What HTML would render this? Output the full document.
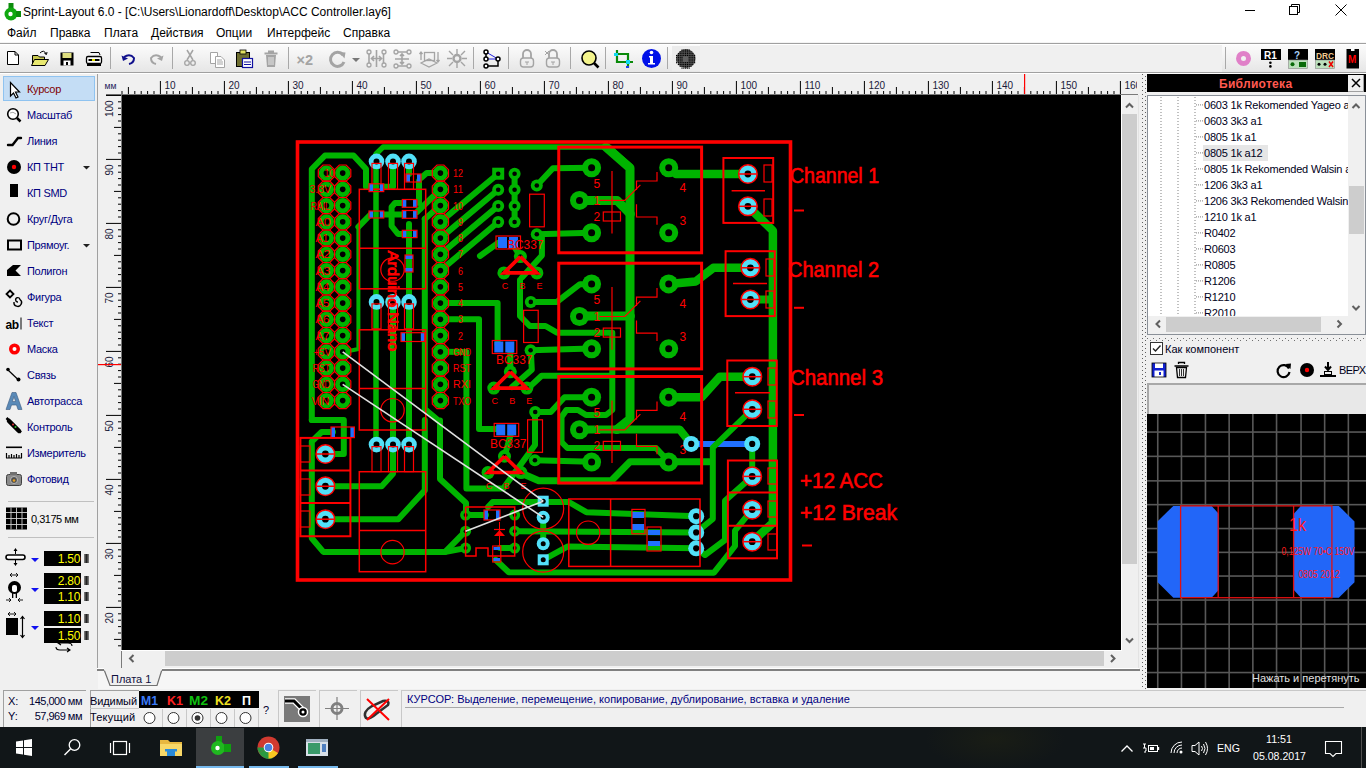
<!DOCTYPE html>
<html><head><meta charset="utf-8"><style>
html,body{margin:0;padding:0;width:1366px;height:768px;overflow:hidden;background:#f0f0f0;font-family:"Liberation Sans", sans-serif;}
.b{position:absolute;box-sizing:border-box}
.t{position:absolute;white-space:pre;line-height:1;font-family:"Liberation Sans", sans-serif}
svg{overflow:visible}
</style></head><body>
<div class="b" style="left:0px;top:0px;width:1366px;height:43px;background:#fff"></div>
<div class="b" style="left:0px;top:42px;width:1366px;height:1px;background:#f4f4f4"></div>
<div class="b" style="left:0px;top:43px;width:1366px;height:1px;background:#a0a0a0"></div>
<div class="b" style="left:0px;top:44px;width:1366px;height:1px;background:#fff"></div>
<div class="b" style="left:0px;top:45px;width:1366px;height:27px;background:#f0f0f0"></div>
<div class="b" style="left:0px;top:45px;width:700px;height:27px;background:linear-gradient(#fbfbfb,#f3f3f3 40%,#e6e6e6)"></div>
<div class="b" style="left:1222px;top:45px;width:144px;height:27px;background:linear-gradient(#fbfbfb,#f3f3f3 40%,#e6e6e6)"></div>
<div class="b" style="left:0px;top:72px;width:1366px;height:1px;background:#a0a0a0"></div>
<div class="b" style="left:0px;top:73px;width:1366px;height:1px;background:#fff"></div>
<svg class="b" style="left:2px;top:2px" width="20" height="20" viewBox="0 0 20 20">
<rect x="6.5" y="1" width="5" height="5" fill="#0c8c0c"/>
<circle cx="9" cy="12" r="6.5" fill="#10a810"/>
<rect x="14" y="9" width="5" height="6" fill="#0c8c0c"/>
<circle cx="8.5" cy="12" r="2.2" fill="#fff"/></svg>
<div class="t" style="left:23px;top:6px;font-size:12px;color:#000;">Sprint-Layout 6.0 - [C:\Users\Lionardoff\Desktop\ACC Controller.lay6]</div>
<div class="b" style="left:1245px;top:10px;width:10px;height:1px;background:#000"></div>
<svg class="b" style="left:1289px;top:4px" width="12" height="12"><rect x="0.5" y="2.5" width="8" height="8" fill="none" stroke="#000"/><path d="M2.5 2.5V0.5H10.5V8.5H8.5" fill="none" stroke="#000"/></svg>
<svg class="b" style="left:1335px;top:4px" width="12" height="12"><path d="M0.5 0.5L11.5 11.5M11.5 0.5L0.5 11.5" stroke="#000" stroke-width="1"/></svg>
<div class="t" style="left:7px;top:27px;font-size:12px;color:#000;">Файл</div>
<div class="t" style="left:50px;top:27px;font-size:12px;color:#000;">Правка</div>
<div class="t" style="left:104px;top:27px;font-size:12px;color:#000;">Плата</div>
<div class="t" style="left:151px;top:27px;font-size:12px;color:#000;">Действия</div>
<div class="t" style="left:216px;top:27px;font-size:12px;color:#000;">Опции</div>
<div class="t" style="left:267px;top:27px;font-size:12px;color:#000;">Интерфейс</div>
<div class="t" style="left:343px;top:27px;font-size:12px;color:#000;">Справка</div>
<div class="b" style="left:110px;top:47px;width:1px;height:22px;background:#a8a8a8"></div>
<div class="b" style="left:172px;top:47px;width:1px;height:22px;background:#a8a8a8"></div>
<div class="b" style="left:288px;top:47px;width:1px;height:22px;background:#a8a8a8"></div>
<div class="b" style="left:473px;top:47px;width:1px;height:22px;background:#a8a8a8"></div>
<div class="b" style="left:508px;top:47px;width:1px;height:22px;background:#a8a8a8"></div>
<div class="b" style="left:570px;top:47px;width:1px;height:22px;background:#a8a8a8"></div>
<div class="b" style="left:605px;top:47px;width:1px;height:22px;background:#a8a8a8"></div>
<div class="b" style="left:667px;top:47px;width:1px;height:22px;background:#a8a8a8"></div>
<div class="b" style="left:1225px;top:47px;width:1px;height:22px;background:#a8a8a8"></div>
<svg class="b" style="left:0;top:0" width="1366" height="74" viewBox="0 0 1366 74">
<path d="M7.5 51.5H15L18.5 55V64.5H7.5Z" fill="#fff" stroke="#000"/><path d="M15 51.5V55H18.5" fill="none" stroke="#000"/>
<path d="M32.5 55.5H38l1.5 1.5H44.5V65.5H32.5Z" fill="#c8c850" stroke="#000"/><path d="M34.5 59.5H48.5L45 65.5H31.5Z" fill="#e8e870" stroke="#000"/><path d="M40 53Q44 49 46 54M44.5 53.5L46.5 54.5L47 52" fill="none" stroke="#000"/>
<rect x="60.5" y="52.5" width="13" height="13" fill="#000"/><rect x="62.5" y="53" width="9" height="5" fill="#dede80"/><rect x="63.5" y="60.5" width="7" height="5" fill="#fff"/><rect x="66" y="62" width="2" height="3" fill="#000"/>
<path d="M90.5 52.5H99L100 55" fill="none" stroke="#000"/><rect x="86.5" y="56.5" width="15" height="7" rx="1.5" fill="#fff" stroke="#000" stroke-width="1.3"/><rect x="88.5" y="59" width="11" height="2" fill="#000"/><rect x="92" y="59" width="3" height="2" fill="#e0e000"/><rect x="87" y="64" width="14" height="2" fill="#000"/>
<path d="M124 57Q130 53 134 58Q134 63 129 64" fill="none" stroke="#10108c" stroke-width="2"/><path d="M121.5 55.5L123 61L128 58.5Z" fill="#10108c"/>
<path d="M161 57Q155 53 151 58Q151 63 156 64" fill="none" stroke="#a4a4a4" stroke-width="2"/><path d="M163.5 55.5L162 61L157 58.5Z" fill="#a4a4a4"/>
<path d="M187 50L193 60M193 50L187 60" stroke="#a4a4a4" stroke-width="1.5"/><circle cx="187" cy="63" r="2.3" fill="none" stroke="#a4a4a4" stroke-width="1.3"/><circle cx="193" cy="63" r="2.3" fill="none" stroke="#a4a4a4" stroke-width="1.3"/>
<path d="M210.5 52.5H217.5V63.5H210.5Z" fill="#fff" stroke="#a4a4a4"/><path d="M215.5 56.5H221L224.5 60V67.5H215.5Z" fill="#fff" stroke="#a4a4a4"/><path d="M217 60H222M217 62H223M217 64H223" stroke="#a4a4a4"/>
<rect x="236.5" y="52.5" width="13" height="14" fill="#6e6e30" stroke="#000"/><rect x="240" y="50" width="6" height="4" fill="#e0e060" stroke="#000" stroke-width="0.8"/><rect x="242.5" y="58.5" width="10" height="9" fill="#fff" stroke="#1010a0" stroke-width="1.2"/><path d="M244 62H251M244 64.5H251" stroke="#1010a0"/>
<path d="M264.5 53.5H277.5M268 51.5H274" stroke="#a4a4a4" stroke-width="2"/><path d="M266 55H276L275 67H267Z" fill="#a4a4a4"/><path d="M269 57V65M271 57V65M273 57V65" stroke="#e8e8e8"/>
<text x="296.5" y="64.5" font-size="14.5" font-weight="bold" fill="#a4a4a4" font-family="Liberation Sans">×2</text>
<path d="M343 55A7 7 0 1 0 344 62" fill="none" stroke="#a4a4a4" stroke-width="3"/><path d="M339 52L345.5 52.5L344.5 58.5Z" fill="#a4a4a4"/>
<path d="M352 58H360L356 62Z" fill="#777"/>
<path d="M376.5 50V67M369 51V65M383.5 51V65M372 58.5H381M374 56L371.5 58.5L374 61M379 56L381.5 58.5L379 61" stroke="#a4a4a4" stroke-width="1.6" fill="none"/><circle cx="369" cy="52" r="2" fill="#f0f0f0" stroke="#a4a4a4" stroke-width="1.3"/><circle cx="369" cy="65" r="2" fill="#f0f0f0" stroke="#a4a4a4" stroke-width="1.3"/><circle cx="384" cy="52" r="2" fill="#f0f0f0" stroke="#a4a4a4" stroke-width="1.3"/><circle cx="384" cy="65" r="2" fill="#f0f0f0" stroke="#a4a4a4" stroke-width="1.3"/>
<path d="M394 52H410M394 66H410M395 59H409M402 54V64M400 56L402 54L404 56M400 62L402 64L404 62" stroke="#a4a4a4" stroke-width="1.6" fill="none"/><circle cx="396" cy="52" r="2" fill="#f0f0f0" stroke="#a4a4a4" stroke-width="1.3"/><circle cx="409" cy="52" r="2" fill="#f0f0f0" stroke="#a4a4a4" stroke-width="1.3"/><circle cx="396" cy="66" r="2" fill="#f0f0f0" stroke="#a4a4a4" stroke-width="1.3"/><circle cx="409" cy="66" r="2" fill="#f0f0f0" stroke="#a4a4a4" stroke-width="1.3"/>
<rect x="424.5" y="52.5" width="10" height="8" fill="none" stroke="#a4a4a4" stroke-width="1.3"/><path d="M421 63L429 67L437 63L429 59Z" fill="none" stroke="#a4a4a4" stroke-width="1.2"/><path d="M421 60V52M419.5 54L421 52L422.5 54M438 52V62M436.5 60L438 62L439.5 60" stroke="#a4a4a4" stroke-width="1.3" fill="none"/>
<circle cx="457" cy="58.5" r="3.5" fill="none" stroke="#a4a4a4" stroke-width="2.5"/><path d="M447 58.5H452M462 58.5H467M457 49V54M457 63V68M449 51L453 55M465 51L461 55M449 66L453 62M465 66L461 62" stroke="#a4a4a4" stroke-width="1.4"/>
<path d="M486 52L498 59M486 59H498" stroke="#2020e0"/><path d="M486 52V59M486 66H498V59" fill="none" stroke="#000" stroke-width="1.5"/><circle cx="486" cy="52" r="2" fill="#fff" stroke="#000" stroke-width="1.5"/><circle cx="486" cy="59" r="2" fill="#fff" stroke="#000" stroke-width="1.5"/><circle cx="486" cy="66" r="2" fill="#fff" stroke="#000" stroke-width="1.5"/><circle cx="498" cy="59" r="2" fill="#fff" stroke="#000" stroke-width="1.5"/>
<path d="M523 58V54A4 4 0 0 1 531 54V58" fill="none" stroke="#a4a4a4" stroke-width="1.8"/><rect x="520.5" y="58" width="13" height="9" rx="3" fill="none" stroke="#a4a4a4" stroke-width="1.4"/><path d="M525 62H529M527 62V65" stroke="#a4a4a4"/>
<path d="M549 58V54A4 4 0 0 1 557 54V58" fill="none" stroke="#a4a4a4" stroke-width="1.8"/><rect x="546.5" y="58" width="13" height="9" rx="3" fill="none" stroke="#a4a4a4" stroke-width="1.4"/><path d="M551 62H555M553 62V65M545 51L549 55M545 55L549 51" stroke="#a4a4a4"/>
<circle cx="589" cy="58" r="7" fill="#f4f48c" stroke="#000" stroke-width="1.6"/><path d="M594 63L598.5 67.5" stroke="#000" stroke-width="2.6"/>
<path d="M617 50V62H633M614 54H628V68" fill="none" stroke="#0a8a0a" stroke-width="2.2"/><rect x="614" y="53" width="4" height="3" fill="#10d8f0"/><rect x="626" y="60" width="4" height="4" fill="#10d8f0"/><rect x="626" y="66" width="3" height="2" fill="#2040f0"/>
<circle cx="651.5" cy="58.5" r="9.5" fill="#0010e8"/><circle cx="651.5" cy="52.5" r="1.8" fill="#fff"/><path d="M649 56H653V63H655V64.5H648V63H650V57.5H649Z" fill="#fff"/>
<rect x="672" y="46" width="28" height="25" fill="#ececec"/><circle cx="686" cy="58.5" r="9.5" fill="#606060"/><rect x="681.4" y="49.5" width="1.2" height="1.2" fill="#000"/><rect x="683.2" y="49.5" width="1.2" height="1.2" fill="#000"/><rect x="685.0" y="49.5" width="1.2" height="1.2" fill="#000"/><rect x="686.8" y="49.5" width="1.2" height="1.2" fill="#000"/><rect x="688.6" y="49.5" width="1.2" height="1.2" fill="#000"/><rect x="679.6" y="51.3" width="1.2" height="1.2" fill="#000"/><rect x="681.4" y="51.3" width="1.2" height="1.2" fill="#000"/><rect x="683.2" y="51.3" width="1.2" height="1.2" fill="#000"/><rect x="685.0" y="51.3" width="1.2" height="1.2" fill="#000"/><rect x="686.8" y="51.3" width="1.2" height="1.2" fill="#000"/><rect x="688.6" y="51.3" width="1.2" height="1.2" fill="#000"/><rect x="690.4" y="51.3" width="1.2" height="1.2" fill="#000"/><rect x="677.8" y="53.1" width="1.2" height="1.2" fill="#000"/><rect x="679.6" y="53.1" width="1.2" height="1.2" fill="#000"/><rect x="681.4" y="53.1" width="1.2" height="1.2" fill="#000"/><rect x="683.2" y="53.1" width="1.2" height="1.2" fill="#000"/><rect x="685.0" y="53.1" width="1.2" height="1.2" fill="#000"/><rect x="686.8" y="53.1" width="1.2" height="1.2" fill="#000"/><rect x="688.6" y="53.1" width="1.2" height="1.2" fill="#000"/><rect x="690.4" y="53.1" width="1.2" height="1.2" fill="#000"/><rect x="692.2" y="53.1" width="1.2" height="1.2" fill="#000"/><rect x="676.0" y="54.9" width="1.2" height="1.2" fill="#000"/><rect x="677.8" y="54.9" width="1.2" height="1.2" fill="#000"/><rect x="679.6" y="54.9" width="1.2" height="1.2" fill="#000"/><rect x="681.4" y="54.9" width="1.2" height="1.2" fill="#000"/><rect x="683.2" y="54.9" width="1.2" height="1.2" fill="#000"/><rect x="685.0" y="54.9" width="1.2" height="1.2" fill="#000"/><rect x="686.8" y="54.9" width="1.2" height="1.2" fill="#000"/><rect x="688.6" y="54.9" width="1.2" height="1.2" fill="#000"/><rect x="690.4" y="54.9" width="1.2" height="1.2" fill="#000"/><rect x="692.2" y="54.9" width="1.2" height="1.2" fill="#000"/><rect x="694.0" y="54.9" width="1.2" height="1.2" fill="#000"/><rect x="676.0" y="56.7" width="1.2" height="1.2" fill="#000"/><rect x="677.8" y="56.7" width="1.2" height="1.2" fill="#000"/><rect x="679.6" y="56.7" width="1.2" height="1.2" fill="#000"/><rect x="681.4" y="56.7" width="1.2" height="1.2" fill="#000"/><rect x="688.6" y="56.7" width="1.2" height="1.2" fill="#000"/><rect x="690.4" y="56.7" width="1.2" height="1.2" fill="#000"/><rect x="692.2" y="56.7" width="1.2" height="1.2" fill="#000"/><rect x="694.0" y="56.7" width="1.2" height="1.2" fill="#000"/><rect x="676.0" y="58.5" width="1.2" height="1.2" fill="#000"/><rect x="677.8" y="58.5" width="1.2" height="1.2" fill="#000"/><rect x="679.6" y="58.5" width="1.2" height="1.2" fill="#000"/><rect x="681.4" y="58.5" width="1.2" height="1.2" fill="#000"/><rect x="688.6" y="58.5" width="1.2" height="1.2" fill="#000"/><rect x="690.4" y="58.5" width="1.2" height="1.2" fill="#000"/><rect x="692.2" y="58.5" width="1.2" height="1.2" fill="#000"/><rect x="694.0" y="58.5" width="1.2" height="1.2" fill="#000"/><rect x="676.0" y="60.3" width="1.2" height="1.2" fill="#000"/><rect x="677.8" y="60.3" width="1.2" height="1.2" fill="#000"/><rect x="679.6" y="60.3" width="1.2" height="1.2" fill="#000"/><rect x="681.4" y="60.3" width="1.2" height="1.2" fill="#000"/><rect x="688.6" y="60.3" width="1.2" height="1.2" fill="#000"/><rect x="690.4" y="60.3" width="1.2" height="1.2" fill="#000"/><rect x="692.2" y="60.3" width="1.2" height="1.2" fill="#000"/><rect x="694.0" y="60.3" width="1.2" height="1.2" fill="#000"/><rect x="676.0" y="62.1" width="1.2" height="1.2" fill="#000"/><rect x="677.8" y="62.1" width="1.2" height="1.2" fill="#000"/><rect x="679.6" y="62.1" width="1.2" height="1.2" fill="#000"/><rect x="681.4" y="62.1" width="1.2" height="1.2" fill="#000"/><rect x="683.2" y="62.1" width="1.2" height="1.2" fill="#000"/><rect x="685.0" y="62.1" width="1.2" height="1.2" fill="#000"/><rect x="686.8" y="62.1" width="1.2" height="1.2" fill="#000"/><rect x="688.6" y="62.1" width="1.2" height="1.2" fill="#000"/><rect x="690.4" y="62.1" width="1.2" height="1.2" fill="#000"/><rect x="692.2" y="62.1" width="1.2" height="1.2" fill="#000"/><rect x="694.0" y="62.1" width="1.2" height="1.2" fill="#000"/><rect x="677.8" y="63.9" width="1.2" height="1.2" fill="#000"/><rect x="679.6" y="63.9" width="1.2" height="1.2" fill="#000"/><rect x="681.4" y="63.9" width="1.2" height="1.2" fill="#000"/><rect x="683.2" y="63.9" width="1.2" height="1.2" fill="#000"/><rect x="685.0" y="63.9" width="1.2" height="1.2" fill="#000"/><rect x="686.8" y="63.9" width="1.2" height="1.2" fill="#000"/><rect x="688.6" y="63.9" width="1.2" height="1.2" fill="#000"/><rect x="690.4" y="63.9" width="1.2" height="1.2" fill="#000"/><rect x="692.2" y="63.9" width="1.2" height="1.2" fill="#000"/><rect x="679.6" y="65.7" width="1.2" height="1.2" fill="#000"/><rect x="681.4" y="65.7" width="1.2" height="1.2" fill="#000"/><rect x="683.2" y="65.7" width="1.2" height="1.2" fill="#000"/><rect x="685.0" y="65.7" width="1.2" height="1.2" fill="#000"/><rect x="686.8" y="65.7" width="1.2" height="1.2" fill="#000"/><rect x="688.6" y="65.7" width="1.2" height="1.2" fill="#000"/><rect x="690.4" y="65.7" width="1.2" height="1.2" fill="#000"/><rect x="681.4" y="67.5" width="1.2" height="1.2" fill="#000"/><rect x="683.2" y="67.5" width="1.2" height="1.2" fill="#000"/><rect x="685.0" y="67.5" width="1.2" height="1.2" fill="#000"/><rect x="686.8" y="67.5" width="1.2" height="1.2" fill="#000"/><rect x="688.6" y="67.5" width="1.2" height="1.2" fill="#000"/>
<circle cx="1243.5" cy="58.4" r="5" fill="none" stroke="#e080c8" stroke-width="5"/>
<rect x="1261" y="49" width="20" height="11" fill="#000"/><text x="1264" y="58.5" font-size="10" font-weight="bold" fill="#fff" font-family="Liberation Sans">R1</text><circle cx="1270.4" cy="62.8" r="1.3" fill="#000"/><circle cx="1270.4" cy="66.4" r="1.3" fill="#000"/>
<rect x="1288" y="49" width="20" height="11" fill="#000"/><text x="1294" y="58.5" font-size="10" font-weight="bold" fill="#a8d0f8" font-family="Liberation Sans">?</text><rect x="1288.5" y="60" width="19" height="8.5" fill="#bce0bc" stroke="#888" stroke-width="0.6"/><circle cx="1292.5" cy="64.3" r="2" fill="#0a6a0a"/><rect x="1299" y="62" width="7" height="5" fill="#0a6a0a"/>
<rect x="1315" y="49" width="20" height="11" fill="#000"/><text x="1316" y="58.5" font-size="9" font-weight="bold" fill="#f0c890" font-family="Liberation Sans" textLength="18" lengthAdjust="spacingAndGlyphs">DRC</text><rect x="1315.5" y="60" width="19" height="8.5" fill="#bce0bc" stroke="#888" stroke-width="0.6"/><circle cx="1319" cy="64.3" r="1.5" fill="#000"/><circle cx="1325" cy="64.3" r="1.5" fill="#000"/><path d="M1329 61.5L1333 67M1333 61.5L1329 67" stroke="#e00" stroke-width="1.5"/>
<rect x="1346.5" y="49" width="12.5" height="19.5" fill="#000"/><rect x="1351" y="49" width="3.5" height="2" fill="#fff"/><text x="1348" y="63" font-size="10" font-weight="bold" fill="#f00" font-family="Liberation Sans">M</text>
</svg>
<div class="b" style="left:97px;top:74px;width:1px;height:596px;background:#a0a0a0"></div>
<div class="b" style="left:3px;top:76px;width:92px;height:25px;background:#c4ddf5;border:1px solid #8fc3f0"></div>
<div class="t" style="left:27px;top:84px;font-size:11px;color:#800000;letter-spacing:-0.3px">Курсор</div>
<div class="t" style="left:27px;top:110px;font-size:11px;color:#000080;letter-spacing:-0.3px">Масштаб</div>
<div class="t" style="left:27px;top:136px;font-size:11px;color:#000080;letter-spacing:-0.3px">Линия</div>
<div class="t" style="left:27px;top:162px;font-size:11px;color:#000080;letter-spacing:-0.3px">КП ТНТ</div>
<div class="t" style="left:27px;top:188px;font-size:11px;color:#000080;letter-spacing:-0.3px">КП SMD</div>
<div class="t" style="left:27px;top:214px;font-size:11px;color:#000080;letter-spacing:-0.3px">Круг/Дуга</div>
<div class="t" style="left:27px;top:240px;font-size:11px;color:#000080;letter-spacing:-0.3px">Прямоуг.</div>
<div class="t" style="left:27px;top:266px;font-size:11px;color:#000080;letter-spacing:-0.3px">Полигон</div>
<div class="t" style="left:27px;top:292px;font-size:11px;color:#000080;letter-spacing:-0.3px">Фигура</div>
<div class="t" style="left:27px;top:318px;font-size:11px;color:#000080;letter-spacing:-0.3px">Текст</div>
<div class="t" style="left:27px;top:344px;font-size:11px;color:#000080;letter-spacing:-0.3px">Маска</div>
<div class="t" style="left:27px;top:370px;font-size:11px;color:#000080;letter-spacing:-0.3px">Связь</div>
<div class="t" style="left:27px;top:396px;font-size:11px;color:#000080;letter-spacing:-0.3px">Автотрасса</div>
<div class="t" style="left:27px;top:422px;font-size:11px;color:#000080;letter-spacing:-0.3px">Контроль</div>
<div class="t" style="left:27px;top:448px;font-size:11px;color:#000080;letter-spacing:-0.3px">Измеритель</div>
<div class="t" style="left:27px;top:474px;font-size:11px;color:#000080;letter-spacing:-0.3px">Фотовид</div>
<svg class="b" style="left:0;top:0" width="100" height="690" viewBox="0 0 100 690">
<path d="M10.5 82.5V96L13.5 93L16 98L18 97L15.5 92H19.5Z" fill="#fff" stroke="#000" stroke-width="1.2"/>
<circle cx="13" cy="114" r="5.3" fill="#fff" stroke="#000" stroke-width="1.6"/><path d="M10 113Q13 111 16 114" stroke="#aaa" fill="none"/><path d="M17 118L20.5 121.5" stroke="#000" stroke-width="2.5"/>
<path d="M8 145L12.5 145L18 138L21 138" fill="none" stroke="#000" stroke-width="2.4" stroke-linecap="round"/>
<circle cx="14" cy="167" r="7" fill="#000"/><circle cx="14" cy="167" r="2.2" fill="#f00"/><path d="M83 166H90L86.5 169.5Z" fill="#202020"/>
<rect x="10" y="184" width="8" height="13" fill="#000"/>
<circle cx="13.5" cy="219" r="5.8" fill="none" stroke="#000" stroke-width="2"/>
<rect x="8" y="240.5" width="13" height="9" fill="none" stroke="#000" stroke-width="2"/><path d="M83 244H90L86.5 247.5Z" fill="#202020"/>
<path d="M13 265H21L15.5 270.5L21 276H7V270Z" fill="#000"/>
<path d="M10 290.5L13.5 294L10 297.5L6.5 294Z" fill="none" stroke="#000" stroke-width="1.8"/><path d="M18 302A2.2 2.2 0 1 1 20 299.5A3.8 3.8 0 1 1 14 302" fill="none" stroke="#000" stroke-width="1.4"/>
<text x="5.5" y="328.5" font-size="12" font-weight="bold" fill="#000" font-family="Liberation Sans" letter-spacing="-0.5">ab</text><rect x="20.5" y="317.5" width="1" height="12" fill="#000"/>
<circle cx="14.5" cy="349" r="5.5" fill="#f00"/><circle cx="14.5" cy="349" r="2" fill="#fff"/>
<path d="M8 370L17.5 379" stroke="#000" stroke-width="1.2"/><circle cx="8" cy="369.5" r="1.8" fill="#000"/><circle cx="18.5" cy="379.5" r="2" fill="#000"/>
<path d="M6 409.5L12 392.5H16L22 409.5H18L16.5 405H11.5L10 409.5Z M12.5 401.5H15.5L14 396.5Z" fill="#5a8ab8" stroke="#3a5a80" stroke-width="0.6"/>
<path d="M6.5 418L21 432.5" stroke="#000" stroke-width="2.5"/><path d="M9 421L19 431" stroke="#000" stroke-width="4.5" stroke-linecap="round"/><circle cx="13" cy="424.5" r="1" fill="#e03030"/><circle cx="15.5" cy="427" r="1" fill="#30c030"/>
<rect x="6" y="446.5" width="16" height="1.6" fill="#000"/><path d="M6.5 458V453M9 458V455M11.5 458V454M14 458V455M16.5 458V454M19 458V455M21.5 458V453M6 458H22" stroke="#000" stroke-width="1.2"/>
<rect x="6.5" y="474.5" width="15" height="11" rx="2" fill="#8a8a8a" stroke="#404040"/><rect x="10" y="472" width="7" height="3" fill="#707070"/><circle cx="14" cy="480" r="3.5" fill="#505050" stroke="#ccc" stroke-width="0.8"/><circle cx="14" cy="480.5" r="1.3" fill="#e8a020"/>
<rect x="6" y="507.5" width="21" height="22" fill="#000"/><path d="M6 512.5H27M6 518.5H27M6 524.5H27M11 507.5V529.5M16.5 507.5V529.5M22 507.5V529.5" stroke="#d0d0d0" stroke-width="0.9"/>
<rect x="6" y="555" width="19" height="4.5" rx="2.2" fill="#fff" stroke="#000" stroke-width="1.6"/><path d="M15.5 548L13.5 551H17.5Z M15.5 566L13.5 563H17.5Z" fill="#000"/><path d="M15.5 549V554M15.5 560V565" stroke="#000"/>
<path d="M31 558H39L35 562Z" fill="#1010f0"/>
<path d="M10 575H18M12 573L10 575L12 577M16 573L18 575L16 577" stroke="#000" stroke-width="0.9" fill="none"/>
<circle cx="14.5" cy="587.5" r="6.5" fill="#000"/><rect x="12" y="585" width="5" height="7" rx="2" fill="#fff"/><rect x="12" y="592" width="1.3" height="6" fill="#000"/><rect x="15.7" y="592" width="1.3" height="6" fill="#000"/>
<path d="M6 600H11M9 598L11 600L9 602M23 600H18M20 598L18 600L20 602" stroke="#000" stroke-width="0.9" fill="none"/>
<path d="M31 588H39L35 592Z" fill="#1010f0"/>
<path d="M8 614H16M10 612L8 614L10 616M14 612L16 614L14 616" stroke="#000" stroke-width="0.9" fill="none"/>
<rect x="6" y="618" width="12" height="17" fill="#000"/><path d="M22.5 617V637M20.5 619L22.5 616.5L24.5 619M20.5 635L22.5 637.5L24.5 635" stroke="#000" stroke-width="1.2" fill="none"/>
<path d="M31 626H39L35 630Z" fill="#1010f0"/>
<path d="M56 647Q56 650 60 650H70M67 648L70 650L67 652M72 646Q72 643 68 643H58M61 641L58 643L61 645" stroke="#000" stroke-width="1.1" fill="none"/>
</svg>
<div class="b" style="left:8px;top:501px;width:86px;height:1px;background:#c0c0c0"></div>
<div class="b" style="left:8px;top:537px;width:86px;height:1px;background:#c0c0c0"></div>
<div class="t" style="left:31px;top:514px;font-size:11px;color:#000;letter-spacing:-0.5px">0,3175 мм</div>
<div class="b" style="left:44px;top:551px;width:37px;height:15px;background:#000"></div>
<div class="t" style="left:44px;top:553px;font-size:12px;color:#ffff00;width:36px;text-align:right;letter-spacing:-0.3px">1.50</div>
<div class="b" style="left:84px;top:554px;width:5px;height:9px;background:linear-gradient(90deg,#888,#222 50%,#888)"></div>
<div class="b" style="left:44px;top:573px;width:37px;height:15px;background:#000"></div>
<div class="t" style="left:44px;top:575px;font-size:12px;color:#ffff00;width:36px;text-align:right;letter-spacing:-0.3px">2.80</div>
<div class="b" style="left:84px;top:576px;width:5px;height:9px;background:linear-gradient(90deg,#888,#222 50%,#888)"></div>
<div class="b" style="left:44px;top:589px;width:37px;height:15px;background:#000"></div>
<div class="t" style="left:44px;top:591px;font-size:12px;color:#ffff00;width:36px;text-align:right;letter-spacing:-0.3px">1.10</div>
<div class="b" style="left:84px;top:592px;width:5px;height:9px;background:linear-gradient(90deg,#888,#222 50%,#888)"></div>
<div class="b" style="left:44px;top:611px;width:37px;height:15px;background:#000"></div>
<div class="t" style="left:44px;top:613px;font-size:12px;color:#ffff00;width:36px;text-align:right;letter-spacing:-0.3px">1.10</div>
<div class="b" style="left:84px;top:614px;width:5px;height:9px;background:linear-gradient(90deg,#888,#222 50%,#888)"></div>
<div class="b" style="left:44px;top:628px;width:37px;height:15px;background:#000"></div>
<div class="t" style="left:44px;top:630px;font-size:12px;color:#ffff00;width:36px;text-align:right;letter-spacing:-0.3px">1.50</div>
<div class="b" style="left:84px;top:631px;width:5px;height:9px;background:linear-gradient(90deg,#888,#222 50%,#888)"></div>
<div class="b" style="left:98px;top:74px;width:1041px;height:596px;background:#f0f0f0"></div>
<svg class="b" style="left:0;top:0;overflow:hidden" width="1137" height="670" viewBox="0 0 1137 670" font-family="Liberation Sans, sans-serif"><rect x="121.5" y="91" width="1" height="3" fill="#000"/><rect x="127.9" y="87" width="1" height="7" fill="#000"/><rect x="134.3" y="91" width="1" height="3" fill="#000"/><rect x="140.7" y="91" width="1" height="3" fill="#000"/><rect x="147.1" y="91" width="1" height="3" fill="#000"/><rect x="153.5" y="91" width="1" height="3" fill="#000"/><rect x="159.9" y="81" width="1" height="13" fill="#000"/><text x="164.4" y="88.5" font-size="10" fill="#1a1a3a">10</text><rect x="166.3" y="91" width="1" height="3" fill="#000"/><rect x="172.7" y="91" width="1" height="3" fill="#000"/><rect x="179.1" y="91" width="1" height="3" fill="#000"/><rect x="185.5" y="91" width="1" height="3" fill="#000"/><rect x="191.9" y="87" width="1" height="7" fill="#000"/><rect x="198.3" y="91" width="1" height="3" fill="#000"/><rect x="204.7" y="91" width="1" height="3" fill="#000"/><rect x="211.1" y="91" width="1" height="3" fill="#000"/><rect x="217.5" y="91" width="1" height="3" fill="#000"/><rect x="223.9" y="81" width="1" height="13" fill="#000"/><text x="228.4" y="88.5" font-size="10" fill="#1a1a3a">20</text><rect x="230.3" y="91" width="1" height="3" fill="#000"/><rect x="236.7" y="91" width="1" height="3" fill="#000"/><rect x="243.1" y="91" width="1" height="3" fill="#000"/><rect x="249.5" y="91" width="1" height="3" fill="#000"/><rect x="255.9" y="87" width="1" height="7" fill="#000"/><rect x="262.3" y="91" width="1" height="3" fill="#000"/><rect x="268.7" y="91" width="1" height="3" fill="#000"/><rect x="275.1" y="91" width="1" height="3" fill="#000"/><rect x="281.5" y="91" width="1" height="3" fill="#000"/><rect x="287.9" y="81" width="1" height="13" fill="#000"/><text x="292.4" y="88.5" font-size="10" fill="#1a1a3a">30</text><rect x="294.3" y="91" width="1" height="3" fill="#000"/><rect x="300.7" y="91" width="1" height="3" fill="#000"/><rect x="307.1" y="91" width="1" height="3" fill="#000"/><rect x="313.5" y="91" width="1" height="3" fill="#000"/><rect x="319.9" y="87" width="1" height="7" fill="#000"/><rect x="326.3" y="91" width="1" height="3" fill="#000"/><rect x="332.7" y="91" width="1" height="3" fill="#000"/><rect x="339.1" y="91" width="1" height="3" fill="#000"/><rect x="345.5" y="91" width="1" height="3" fill="#000"/><rect x="351.9" y="81" width="1" height="13" fill="#000"/><text x="356.4" y="88.5" font-size="10" fill="#1a1a3a">40</text><rect x="358.3" y="91" width="1" height="3" fill="#000"/><rect x="364.7" y="91" width="1" height="3" fill="#000"/><rect x="371.1" y="91" width="1" height="3" fill="#000"/><rect x="377.5" y="91" width="1" height="3" fill="#000"/><rect x="383.9" y="87" width="1" height="7" fill="#000"/><rect x="390.3" y="91" width="1" height="3" fill="#000"/><rect x="396.7" y="91" width="1" height="3" fill="#000"/><rect x="403.1" y="91" width="1" height="3" fill="#000"/><rect x="409.5" y="91" width="1" height="3" fill="#000"/><rect x="415.9" y="81" width="1" height="13" fill="#000"/><text x="420.4" y="88.5" font-size="10" fill="#1a1a3a">50</text><rect x="422.3" y="91" width="1" height="3" fill="#000"/><rect x="428.7" y="91" width="1" height="3" fill="#000"/><rect x="435.1" y="91" width="1" height="3" fill="#000"/><rect x="441.5" y="91" width="1" height="3" fill="#000"/><rect x="447.9" y="87" width="1" height="7" fill="#000"/><rect x="454.3" y="91" width="1" height="3" fill="#000"/><rect x="460.7" y="91" width="1" height="3" fill="#000"/><rect x="467.1" y="91" width="1" height="3" fill="#000"/><rect x="473.5" y="91" width="1" height="3" fill="#000"/><rect x="479.9" y="81" width="1" height="13" fill="#000"/><text x="484.4" y="88.5" font-size="10" fill="#1a1a3a">60</text><rect x="486.3" y="91" width="1" height="3" fill="#000"/><rect x="492.7" y="91" width="1" height="3" fill="#000"/><rect x="499.1" y="91" width="1" height="3" fill="#000"/><rect x="505.5" y="91" width="1" height="3" fill="#000"/><rect x="511.9" y="87" width="1" height="7" fill="#000"/><rect x="518.3" y="91" width="1" height="3" fill="#000"/><rect x="524.7" y="91" width="1" height="3" fill="#000"/><rect x="531.1" y="91" width="1" height="3" fill="#000"/><rect x="537.5" y="91" width="1" height="3" fill="#000"/><rect x="543.9" y="81" width="1" height="13" fill="#000"/><text x="548.4" y="88.5" font-size="10" fill="#1a1a3a">70</text><rect x="550.3" y="91" width="1" height="3" fill="#000"/><rect x="556.7" y="91" width="1" height="3" fill="#000"/><rect x="563.1" y="91" width="1" height="3" fill="#000"/><rect x="569.5" y="91" width="1" height="3" fill="#000"/><rect x="575.9" y="87" width="1" height="7" fill="#000"/><rect x="582.3" y="91" width="1" height="3" fill="#000"/><rect x="588.7" y="91" width="1" height="3" fill="#000"/><rect x="595.1" y="91" width="1" height="3" fill="#000"/><rect x="601.5" y="91" width="1" height="3" fill="#000"/><rect x="607.9" y="81" width="1" height="13" fill="#000"/><text x="612.4" y="88.5" font-size="10" fill="#1a1a3a">80</text><rect x="614.3" y="91" width="1" height="3" fill="#000"/><rect x="620.7" y="91" width="1" height="3" fill="#000"/><rect x="627.1" y="91" width="1" height="3" fill="#000"/><rect x="633.5" y="91" width="1" height="3" fill="#000"/><rect x="639.9" y="87" width="1" height="7" fill="#000"/><rect x="646.3" y="91" width="1" height="3" fill="#000"/><rect x="652.7" y="91" width="1" height="3" fill="#000"/><rect x="659.1" y="91" width="1" height="3" fill="#000"/><rect x="665.5" y="91" width="1" height="3" fill="#000"/><rect x="671.9" y="81" width="1" height="13" fill="#000"/><text x="676.4" y="88.5" font-size="10" fill="#1a1a3a">90</text><rect x="678.3" y="91" width="1" height="3" fill="#000"/><rect x="684.7" y="91" width="1" height="3" fill="#000"/><rect x="691.1" y="91" width="1" height="3" fill="#000"/><rect x="697.5" y="91" width="1" height="3" fill="#000"/><rect x="703.9" y="87" width="1" height="7" fill="#000"/><rect x="710.3" y="91" width="1" height="3" fill="#000"/><rect x="716.7" y="91" width="1" height="3" fill="#000"/><rect x="723.1" y="91" width="1" height="3" fill="#000"/><rect x="729.5" y="91" width="1" height="3" fill="#000"/><rect x="735.9" y="81" width="1" height="13" fill="#000"/><text x="740.4" y="88.5" font-size="10" fill="#1a1a3a">100</text><rect x="742.3" y="91" width="1" height="3" fill="#000"/><rect x="748.7" y="91" width="1" height="3" fill="#000"/><rect x="755.1" y="91" width="1" height="3" fill="#000"/><rect x="761.5" y="91" width="1" height="3" fill="#000"/><rect x="767.9" y="87" width="1" height="7" fill="#000"/><rect x="774.3" y="91" width="1" height="3" fill="#000"/><rect x="780.7" y="91" width="1" height="3" fill="#000"/><rect x="787.1" y="91" width="1" height="3" fill="#000"/><rect x="793.5" y="91" width="1" height="3" fill="#000"/><rect x="799.9" y="81" width="1" height="13" fill="#000"/><text x="804.4" y="88.5" font-size="10" fill="#1a1a3a">110</text><rect x="806.3" y="91" width="1" height="3" fill="#000"/><rect x="812.7" y="91" width="1" height="3" fill="#000"/><rect x="819.1" y="91" width="1" height="3" fill="#000"/><rect x="825.5" y="91" width="1" height="3" fill="#000"/><rect x="831.9" y="87" width="1" height="7" fill="#000"/><rect x="838.3" y="91" width="1" height="3" fill="#000"/><rect x="844.7" y="91" width="1" height="3" fill="#000"/><rect x="851.1" y="91" width="1" height="3" fill="#000"/><rect x="857.5" y="91" width="1" height="3" fill="#000"/><rect x="863.9" y="81" width="1" height="13" fill="#000"/><text x="868.4" y="88.5" font-size="10" fill="#1a1a3a">120</text><rect x="870.3" y="91" width="1" height="3" fill="#000"/><rect x="876.7" y="91" width="1" height="3" fill="#000"/><rect x="883.1" y="91" width="1" height="3" fill="#000"/><rect x="889.5" y="91" width="1" height="3" fill="#000"/><rect x="895.9" y="87" width="1" height="7" fill="#000"/><rect x="902.3" y="91" width="1" height="3" fill="#000"/><rect x="908.7" y="91" width="1" height="3" fill="#000"/><rect x="915.1" y="91" width="1" height="3" fill="#000"/><rect x="921.5" y="91" width="1" height="3" fill="#000"/><rect x="927.9" y="81" width="1" height="13" fill="#000"/><text x="932.4" y="88.5" font-size="10" fill="#1a1a3a">130</text><rect x="934.3" y="91" width="1" height="3" fill="#000"/><rect x="940.7" y="91" width="1" height="3" fill="#000"/><rect x="947.1" y="91" width="1" height="3" fill="#000"/><rect x="953.5" y="91" width="1" height="3" fill="#000"/><rect x="959.9" y="87" width="1" height="7" fill="#000"/><rect x="966.3" y="91" width="1" height="3" fill="#000"/><rect x="972.7" y="91" width="1" height="3" fill="#000"/><rect x="979.1" y="91" width="1" height="3" fill="#000"/><rect x="985.5" y="91" width="1" height="3" fill="#000"/><rect x="991.9" y="81" width="1" height="13" fill="#000"/><text x="996.4" y="88.5" font-size="10" fill="#1a1a3a">140</text><rect x="998.3" y="91" width="1" height="3" fill="#000"/><rect x="1004.7" y="91" width="1" height="3" fill="#000"/><rect x="1011.1" y="91" width="1" height="3" fill="#000"/><rect x="1017.5" y="91" width="1" height="3" fill="#000"/><rect x="1023.9" y="87" width="1" height="7" fill="#000"/><rect x="1030.3" y="91" width="1" height="3" fill="#000"/><rect x="1036.7" y="91" width="1" height="3" fill="#000"/><rect x="1043.1" y="91" width="1" height="3" fill="#000"/><rect x="1049.5" y="91" width="1" height="3" fill="#000"/><rect x="1055.9" y="81" width="1" height="13" fill="#000"/><text x="1060.4" y="88.5" font-size="10" fill="#1a1a3a">150</text><rect x="1062.3" y="91" width="1" height="3" fill="#000"/><rect x="1068.7" y="91" width="1" height="3" fill="#000"/><rect x="1075.1" y="91" width="1" height="3" fill="#000"/><rect x="1081.5" y="91" width="1" height="3" fill="#000"/><rect x="1087.9" y="87" width="1" height="7" fill="#000"/><rect x="1094.3" y="91" width="1" height="3" fill="#000"/><rect x="1100.7" y="91" width="1" height="3" fill="#000"/><rect x="1107.1" y="91" width="1" height="3" fill="#000"/><rect x="1113.5" y="91" width="1" height="3" fill="#000"/><rect x="1119.9" y="81" width="1" height="13" fill="#000"/><text x="1124.4" y="88.5" font-size="10" fill="#1a1a3a">160</text><rect x="106" y="94.9" width="15" height="1" fill="#000"/><text transform="translate(113.2,100.4) rotate(-90)" text-anchor="end" font-size="10" fill="#1a1a3a">100</text><rect x="118" y="101.3" width="3" height="1" fill="#000"/><rect x="118" y="107.7" width="3" height="1" fill="#000"/><rect x="118" y="114.1" width="3" height="1" fill="#000"/><rect x="118" y="120.5" width="3" height="1" fill="#000"/><rect x="114" y="126.9" width="7" height="1" fill="#000"/><rect x="118" y="133.3" width="3" height="1" fill="#000"/><rect x="118" y="139.7" width="3" height="1" fill="#000"/><rect x="118" y="146.1" width="3" height="1" fill="#000"/><rect x="118" y="152.5" width="3" height="1" fill="#000"/><rect x="106" y="158.9" width="15" height="1" fill="#000"/><text transform="translate(113.2,164.4) rotate(-90)" text-anchor="end" font-size="10" fill="#1a1a3a">90</text><rect x="118" y="165.3" width="3" height="1" fill="#000"/><rect x="118" y="171.7" width="3" height="1" fill="#000"/><rect x="118" y="178.1" width="3" height="1" fill="#000"/><rect x="118" y="184.5" width="3" height="1" fill="#000"/><rect x="114" y="190.9" width="7" height="1" fill="#000"/><rect x="118" y="197.3" width="3" height="1" fill="#000"/><rect x="118" y="203.7" width="3" height="1" fill="#000"/><rect x="118" y="210.1" width="3" height="1" fill="#000"/><rect x="118" y="216.5" width="3" height="1" fill="#000"/><rect x="106" y="222.9" width="15" height="1" fill="#000"/><text transform="translate(113.2,228.4) rotate(-90)" text-anchor="end" font-size="10" fill="#1a1a3a">80</text><rect x="118" y="229.3" width="3" height="1" fill="#000"/><rect x="118" y="235.7" width="3" height="1" fill="#000"/><rect x="118" y="242.1" width="3" height="1" fill="#000"/><rect x="118" y="248.5" width="3" height="1" fill="#000"/><rect x="114" y="254.9" width="7" height="1" fill="#000"/><rect x="118" y="261.3" width="3" height="1" fill="#000"/><rect x="118" y="267.7" width="3" height="1" fill="#000"/><rect x="118" y="274.1" width="3" height="1" fill="#000"/><rect x="118" y="280.5" width="3" height="1" fill="#000"/><rect x="106" y="286.9" width="15" height="1" fill="#000"/><text transform="translate(113.2,292.4) rotate(-90)" text-anchor="end" font-size="10" fill="#1a1a3a">70</text><rect x="118" y="293.3" width="3" height="1" fill="#000"/><rect x="118" y="299.7" width="3" height="1" fill="#000"/><rect x="118" y="306.1" width="3" height="1" fill="#000"/><rect x="118" y="312.5" width="3" height="1" fill="#000"/><rect x="114" y="318.9" width="7" height="1" fill="#000"/><rect x="118" y="325.3" width="3" height="1" fill="#000"/><rect x="118" y="331.7" width="3" height="1" fill="#000"/><rect x="118" y="338.1" width="3" height="1" fill="#000"/><rect x="118" y="344.5" width="3" height="1" fill="#000"/><rect x="106" y="350.9" width="15" height="1" fill="#000"/><text transform="translate(113.2,356.4) rotate(-90)" text-anchor="end" font-size="10" fill="#1a1a3a">60</text><rect x="118" y="357.3" width="3" height="1" fill="#000"/><rect x="118" y="363.7" width="3" height="1" fill="#000"/><rect x="118" y="370.1" width="3" height="1" fill="#000"/><rect x="118" y="376.5" width="3" height="1" fill="#000"/><rect x="114" y="382.9" width="7" height="1" fill="#000"/><rect x="118" y="389.3" width="3" height="1" fill="#000"/><rect x="118" y="395.7" width="3" height="1" fill="#000"/><rect x="118" y="402.1" width="3" height="1" fill="#000"/><rect x="118" y="408.5" width="3" height="1" fill="#000"/><rect x="106" y="414.9" width="15" height="1" fill="#000"/><text transform="translate(113.2,420.4) rotate(-90)" text-anchor="end" font-size="10" fill="#1a1a3a">50</text><rect x="118" y="421.3" width="3" height="1" fill="#000"/><rect x="118" y="427.7" width="3" height="1" fill="#000"/><rect x="118" y="434.1" width="3" height="1" fill="#000"/><rect x="118" y="440.5" width="3" height="1" fill="#000"/><rect x="114" y="446.9" width="7" height="1" fill="#000"/><rect x="118" y="453.3" width="3" height="1" fill="#000"/><rect x="118" y="459.7" width="3" height="1" fill="#000"/><rect x="118" y="466.1" width="3" height="1" fill="#000"/><rect x="118" y="472.5" width="3" height="1" fill="#000"/><rect x="106" y="478.9" width="15" height="1" fill="#000"/><text transform="translate(113.2,484.4) rotate(-90)" text-anchor="end" font-size="10" fill="#1a1a3a">40</text><rect x="118" y="485.3" width="3" height="1" fill="#000"/><rect x="118" y="491.7" width="3" height="1" fill="#000"/><rect x="118" y="498.1" width="3" height="1" fill="#000"/><rect x="118" y="504.5" width="3" height="1" fill="#000"/><rect x="114" y="510.9" width="7" height="1" fill="#000"/><rect x="118" y="517.3" width="3" height="1" fill="#000"/><rect x="118" y="523.7" width="3" height="1" fill="#000"/><rect x="118" y="530.1" width="3" height="1" fill="#000"/><rect x="118" y="536.5" width="3" height="1" fill="#000"/><rect x="106" y="542.9" width="15" height="1" fill="#000"/><text transform="translate(113.2,548.4) rotate(-90)" text-anchor="end" font-size="10" fill="#1a1a3a">30</text><rect x="118" y="549.3" width="3" height="1" fill="#000"/><rect x="118" y="555.7" width="3" height="1" fill="#000"/><rect x="118" y="562.1" width="3" height="1" fill="#000"/><rect x="118" y="568.5" width="3" height="1" fill="#000"/><rect x="114" y="574.9" width="7" height="1" fill="#000"/><rect x="118" y="581.3" width="3" height="1" fill="#000"/><rect x="118" y="587.7" width="3" height="1" fill="#000"/><rect x="118" y="594.1" width="3" height="1" fill="#000"/><rect x="118" y="600.5" width="3" height="1" fill="#000"/><rect x="106" y="606.9" width="15" height="1" fill="#000"/><text transform="translate(113.2,612.4) rotate(-90)" text-anchor="end" font-size="10" fill="#1a1a3a">20</text><rect x="118" y="613.3" width="3" height="1" fill="#000"/><rect x="118" y="619.7" width="3" height="1" fill="#000"/><rect x="118" y="626.1" width="3" height="1" fill="#000"/><rect x="118" y="632.5" width="3" height="1" fill="#000"/><rect x="114" y="638.9" width="7" height="1" fill="#000"/><rect x="118" y="645.3" width="3" height="1" fill="#000"/><text x="104.5" y="89" font-size="9" fill="#1a1a5a" textLength="12" lengthAdjust="spacingAndGlyphs">мм</text><rect x="106" y="94.5" width="16" height="1.2" fill="#000"/><rect x="1024" y="74" width="1.2" height="21" fill="#f00"/><rect x="98" y="364" width="23" height="1.2" fill="#f00"/></svg>
<div class="b" style="left:121px;top:94px;width:1px;height:574px;background:#7a7a7a"></div>
<div class="b" style="left:121px;top:94px;width:1017px;height:1px;background:#7a7a7a"></div>
<div class="b" style="left:122px;top:95px;width:999px;height:555px;background:#000"></div>
<svg class="b" style="left:0;top:0" width="1366" height="768" viewBox="0 0 1366 768"><g font-family="Liberation Sans, sans-serif"><path d="M311.8,420 L311.8,169 L325,155.5 L353.5,155.5 L366,169 L366,186.8 L376,186.8" fill="none" stroke="#00b400" stroke-width="6" stroke-linecap="round" stroke-linejoin="round"/><path d="M311.8,420 L343.8,420 L343.8,454 L325.4,454" fill="none" stroke="#00b400" stroke-width="6" stroke-linecap="round" stroke-linejoin="round"/><path d="M333,432 L321.6,432 L311.8,441.5 L311.8,538.3 L323.3,551.9 L445.2,551.9 L465.6,531.2" fill="none" stroke="#00b400" stroke-width="6" stroke-linecap="round" stroke-linejoin="round"/><path d="M376,444.6 L376,154 L383,147.1 L609,147.1 L630,166" fill="none" stroke="#00b400" stroke-width="5.5" stroke-linecap="round" stroke-linejoin="round"/><path d="M606,147.1 L630,168 L630,419 L617,429.6" fill="none" stroke="#00b400" stroke-width="9" stroke-linecap="round" stroke-linejoin="round"/><path d="M579.1,429.6 L679.7,429.6 L691.4,444.2" fill="none" stroke="#00b400" stroke-width="8" stroke-linecap="round" stroke-linejoin="round"/><path d="M393,161.4 L393,186.8 L383,186.8" fill="none" stroke="#00b400" stroke-width="6" stroke-linecap="round" stroke-linejoin="round"/><path d="M409,161.4 L409,174" fill="none" stroke="#00b400" stroke-width="6" stroke-linecap="round" stroke-linejoin="round"/><path d="M421,178 L426.7,173.1 L440.4,173.1" fill="none" stroke="#00b400" stroke-width="6" stroke-linecap="round" stroke-linejoin="round"/><path d="M419,181 L419,203" fill="none" stroke="#00b400" stroke-width="6" stroke-linecap="round" stroke-linejoin="round"/><path d="M402,203 L395,203 L391.6,207 L391.6,226 L398,234 L402,234" fill="none" stroke="#00b400" stroke-width="6" stroke-linecap="round" stroke-linejoin="round"/><path d="M383,214.5 L402,214.5" fill="none" stroke="#00b400" stroke-width="6" stroke-linecap="round" stroke-linejoin="round"/><path d="M417,212 L440.4,189.3" fill="none" stroke="#00b400" stroke-width="6" stroke-linecap="round" stroke-linejoin="round"/><path d="M424.8,219 L440.4,205.5" fill="none" stroke="#00b400" stroke-width="6" stroke-linecap="round" stroke-linejoin="round"/><path d="M424.8,219 L424.8,409 L438.4,420.6 L440,420.6 L440,479 L466,503 L466,515" fill="none" stroke="#00b400" stroke-width="6" stroke-linecap="round" stroke-linejoin="round"/><path d="M409,224 L409,301.9" fill="none" stroke="#00b400" stroke-width="6" stroke-linecap="round" stroke-linejoin="round"/><path d="M358.4,226.8 L370,215" fill="none" stroke="#00b400" stroke-width="6" stroke-linecap="round" stroke-linejoin="round"/><path d="M358.4,226.8 L358.4,349 L342.7,352.3" fill="none" stroke="#00b400" stroke-width="4" stroke-linecap="round" stroke-linejoin="round"/><path d="M393,301.9 L393,473.75 L381.7,486.25 L325.4,486.25" fill="none" stroke="#00b400" stroke-width="6" stroke-linecap="round" stroke-linejoin="round"/><path d="M409,301.9 L409,444.6" fill="none" stroke="#00b400" stroke-width="6" stroke-linecap="round" stroke-linejoin="round"/><path d="M424.8,420 L424.8,490.4 L398.3,519.2 L325.4,519.2" fill="none" stroke="#00b400" stroke-width="6" stroke-linecap="round" stroke-linejoin="round"/><path d="M440.4,221.85 L498.2,173.7" fill="none" stroke="#00b400" stroke-width="6" stroke-linecap="round" stroke-linejoin="round"/><path d="M440.4,238.1 L498.2,189.79999999999998" fill="none" stroke="#00b400" stroke-width="6" stroke-linecap="round" stroke-linejoin="round"/><path d="M440.4,254.35 L498.2,205.89999999999998" fill="none" stroke="#00b400" stroke-width="6" stroke-linecap="round" stroke-linejoin="round"/><path d="M440.4,270.6 L498.2,222.0" fill="none" stroke="#00b400" stroke-width="6" stroke-linecap="round" stroke-linejoin="round"/><path d="M514.6,173.7 L514.6,222" fill="none" stroke="#00b400" stroke-width="6" stroke-linecap="round" stroke-linejoin="round"/><path d="M498,243 L480,256" fill="none" stroke="#00b400" stroke-width="6" stroke-linecap="round" stroke-linejoin="round"/><path d="M440.4,303.1 L497.6,303.1 L497.6,344.5" fill="none" stroke="#00b400" stroke-width="6" stroke-linecap="round" stroke-linejoin="round"/><path d="M440.4,319.35 L479,319.35 L479,429 L500,429" fill="none" stroke="#00b400" stroke-width="6" stroke-linecap="round" stroke-linejoin="round"/><path d="M440.4,351.85 L466.4,352 L466.4,488.5 L503.2,488.5 L535,445 L535,412" fill="none" stroke="#00b400" stroke-width="6" stroke-linecap="round" stroke-linejoin="round"/><path d="M520.4,472.7 L538.8,480.8 L611.3,480.8 L630,461.8 L709,461.8" fill="none" stroke="#00b400" stroke-width="7" stroke-linecap="round" stroke-linejoin="round"/><path d="M536.8,185.5 L552.9,168.2 L591.6,167.8" fill="none" stroke="#00b400" stroke-width="6" stroke-linecap="round" stroke-linejoin="round"/><path d="M536.8,234.2 L591.6,232.7" fill="none" stroke="#00b400" stroke-width="6" stroke-linecap="round" stroke-linejoin="round"/><path d="M579.5,200.4 L617,200.4 L630.4,214" fill="none" stroke="#00b400" stroke-width="9" stroke-linecap="round" stroke-linejoin="round"/><path d="M668.7,167.8 L676,174 L747.9,174" fill="none" stroke="#00b400" stroke-width="8.5" stroke-linecap="round" stroke-linejoin="round"/><path d="M747.9,206.3 L772.9,230.7 L772.9,522.9 L752.2,541.7" fill="none" stroke="#00b400" stroke-width="8.5" stroke-linecap="round" stroke-linejoin="round"/><path d="M521.9,277.5 L541.9,255.6 L541.9,235" fill="none" stroke="#00b400" stroke-width="6" stroke-linecap="round" stroke-linejoin="round"/><path d="M520.4,256.6 L512,243" fill="none" stroke="#00b400" stroke-width="6" stroke-linecap="round" stroke-linejoin="round"/><path d="M510.3,371.8 L510.3,346" fill="none" stroke="#00b400" stroke-width="6" stroke-linecap="round" stroke-linejoin="round"/><path d="M527,389.4 L541.6,375.7 L612,375.7" fill="none" stroke="#00b400" stroke-width="6" stroke-linecap="round" stroke-linejoin="round"/><path d="M512,387 L531.8,369.8 L530.8,350.3" fill="none" stroke="#00b400" stroke-width="6" stroke-linecap="round" stroke-linejoin="round"/><path d="M530.6,350.3 L591.4,348.4" fill="none" stroke="#00b400" stroke-width="6" stroke-linecap="round" stroke-linejoin="round"/><path d="M530.8,301.9 L557,301.9 L565,295.6 L580,284.2 L591.4,284.2" fill="none" stroke="#00b400" stroke-width="6" stroke-linecap="round" stroke-linejoin="round"/><path d="M520,280 L520,316 L529.8,326 L545.5,326 L557,332.7 L612.3,332.7 L612.3,410 L606,415 L586,415 L578,410 L566.4,410 L561.5,417 L561.5,442 L567.4,448 L656,448 L668.9,461.8" fill="none" stroke="#00b400" stroke-width="6" stroke-linecap="round" stroke-linejoin="round"/><path d="M579.6,316.1 L630.4,316.1" fill="none" stroke="#00b400" stroke-width="9" stroke-linecap="round" stroke-linejoin="round"/><path d="M668.75,283.9 L695.7,281.5 L713.3,267.8 L750.4,267.8" fill="none" stroke="#00b400" stroke-width="8.5" stroke-linecap="round" stroke-linejoin="round"/><path d="M750.4,299.5 L772.9,299.5" fill="none" stroke="#00b400" stroke-width="8" stroke-linecap="round" stroke-linejoin="round"/><path d="M535.2,412 L550.8,412 L564.5,397.3 L591.8,397.3" fill="none" stroke="#00b400" stroke-width="6" stroke-linecap="round" stroke-linejoin="round"/><path d="M668.75,397.2 L701.6,397.2 L720,376.7 L752.3,376.7" fill="none" stroke="#00b400" stroke-width="8.5" stroke-linecap="round" stroke-linejoin="round"/><path d="M691.2,443.9 L752.2,443.9" fill="none" stroke="#2070ff" stroke-width="6" stroke-linecap="round" stroke-linejoin="round"/><path d="M752.2,443.9 L752.2,476.4" fill="none" stroke="#00b400" stroke-width="6" stroke-linecap="round" stroke-linejoin="round"/><path d="M591.8,461.8 L534.9,460.2" fill="none" stroke="#00b400" stroke-width="6" stroke-linecap="round" stroke-linejoin="round"/><path d="M512,430 L504.6,456.2" fill="none" stroke="#00b400" stroke-width="6" stroke-linecap="round" stroke-linejoin="round"/><path d="M752.3,409.3 L712.8,447.7 L712.8,519 L696.2,532.4" fill="none" stroke="#00b400" stroke-width="6" stroke-linecap="round" stroke-linejoin="round"/><path d="M752.2,476.4 L725,500.75 L725,540 L705,555 L696.2,548.3" fill="none" stroke="#00b400" stroke-width="6" stroke-linecap="round" stroke-linejoin="round"/><path d="M752.2,509.6 L735,530.6 L735,546 L714,572.65 L508.8,572.2 L495.6,559.8" fill="none" stroke="#00b400" stroke-width="6" stroke-linecap="round" stroke-linejoin="round"/><path d="M696.2,516.2 L586.4,512.2 L568.8,502 L492.7,502 L488,507" fill="none" stroke="#00b400" stroke-width="6" stroke-linecap="round" stroke-linejoin="round"/><path d="M514.7,531.2 L696.2,532.4" fill="none" stroke="#00b400" stroke-width="6" stroke-linecap="round" stroke-linejoin="round"/><path d="M543.2,559.8 L567.4,546.6 L696.2,548.3" fill="none" stroke="#00b400" stroke-width="6" stroke-linecap="round" stroke-linejoin="round"/><path d="M543.2,517.3 L543.2,543.7" fill="none" stroke="#00b400" stroke-width="6" stroke-linecap="round" stroke-linejoin="round"/><path d="M465.6,515.1 L486,515.1" fill="none" stroke="#00b400" stroke-width="6" stroke-linecap="round" stroke-linejoin="round"/><path d="M465.6,548.1 L445.9,551.7" fill="none" stroke="#00b400" stroke-width="6" stroke-linecap="round" stroke-linejoin="round"/><path d="M500,548.1 L514.7,548.1" fill="none" stroke="#00b400" stroke-width="6" stroke-linecap="round" stroke-linejoin="round"/><circle cx="326.4" cy="173.1" r="7.6" fill="#00b400"/><circle cx="326.4" cy="173.1" r="2.8" fill="#000"/><path d="M334.5,176.5 L329.8,181.2 L323.0,181.2 L318.3,176.5 L318.3,169.7 L323.0,165.0 L329.8,165.0 L334.5,169.7 Z" fill="none" stroke="#ff0000" stroke-width="1.2"/><circle cx="342.7" cy="173.1" r="7.6" fill="#00b400"/><circle cx="342.7" cy="173.1" r="2.8" fill="#000"/><path d="M350.8,176.5 L346.1,181.2 L339.3,181.2 L334.6,176.5 L334.6,169.7 L339.3,165.0 L346.1,165.0 L350.8,169.7 Z" fill="none" stroke="#ff0000" stroke-width="1.2"/><circle cx="440.4" cy="173.1" r="7.6" fill="#00b400"/><circle cx="440.4" cy="173.1" r="2.8" fill="#000"/><path d="M448.5,176.5 L443.8,181.2 L437.0,181.2 L432.3,176.5 L432.3,169.7 L437.0,165.0 L443.8,165.0 L448.5,169.7 Z" fill="none" stroke="#ff0000" stroke-width="1.2"/><circle cx="326.4" cy="189.35" r="7.6" fill="#00b400"/><circle cx="326.4" cy="189.35" r="2.8" fill="#000"/><path d="M334.5,192.7 L329.8,197.5 L323.0,197.5 L318.3,192.7 L318.3,186.0 L323.0,181.2 L329.8,181.2 L334.5,186.0 Z" fill="none" stroke="#ff0000" stroke-width="1.2"/><circle cx="342.7" cy="189.35" r="7.6" fill="#00b400"/><circle cx="342.7" cy="189.35" r="2.8" fill="#000"/><path d="M350.8,192.7 L346.1,197.5 L339.3,197.5 L334.6,192.7 L334.6,186.0 L339.3,181.2 L346.1,181.2 L350.8,186.0 Z" fill="none" stroke="#ff0000" stroke-width="1.2"/><circle cx="440.4" cy="189.35" r="7.6" fill="#00b400"/><circle cx="440.4" cy="189.35" r="2.8" fill="#000"/><path d="M448.5,192.7 L443.8,197.5 L437.0,197.5 L432.3,192.7 L432.3,186.0 L437.0,181.2 L443.8,181.2 L448.5,186.0 Z" fill="none" stroke="#ff0000" stroke-width="1.2"/><circle cx="326.4" cy="205.6" r="7.6" fill="#00b400"/><circle cx="326.4" cy="205.6" r="2.8" fill="#000"/><path d="M334.5,209.0 L329.8,213.7 L323.0,213.7 L318.3,209.0 L318.3,202.2 L323.0,197.5 L329.8,197.5 L334.5,202.2 Z" fill="none" stroke="#ff0000" stroke-width="1.2"/><circle cx="342.7" cy="205.6" r="7.6" fill="#00b400"/><circle cx="342.7" cy="205.6" r="2.8" fill="#000"/><path d="M350.8,209.0 L346.1,213.7 L339.3,213.7 L334.6,209.0 L334.6,202.2 L339.3,197.5 L346.1,197.5 L350.8,202.2 Z" fill="none" stroke="#ff0000" stroke-width="1.2"/><circle cx="440.4" cy="205.6" r="7.6" fill="#00b400"/><circle cx="440.4" cy="205.6" r="2.8" fill="#000"/><path d="M448.5,209.0 L443.8,213.7 L437.0,213.7 L432.3,209.0 L432.3,202.2 L437.0,197.5 L443.8,197.5 L448.5,202.2 Z" fill="none" stroke="#ff0000" stroke-width="1.2"/><circle cx="326.4" cy="221.85" r="7.6" fill="#00b400"/><circle cx="326.4" cy="221.85" r="2.8" fill="#000"/><path d="M334.5,225.2 L329.8,230.0 L323.0,230.0 L318.3,225.2 L318.3,218.5 L323.0,213.7 L329.8,213.7 L334.5,218.5 Z" fill="none" stroke="#ff0000" stroke-width="1.2"/><circle cx="342.7" cy="221.85" r="7.6" fill="#00b400"/><circle cx="342.7" cy="221.85" r="2.8" fill="#000"/><path d="M350.8,225.2 L346.1,230.0 L339.3,230.0 L334.6,225.2 L334.6,218.5 L339.3,213.7 L346.1,213.7 L350.8,218.5 Z" fill="none" stroke="#ff0000" stroke-width="1.2"/><circle cx="440.4" cy="221.85" r="7.6" fill="#00b400"/><circle cx="440.4" cy="221.85" r="2.8" fill="#000"/><path d="M448.5,225.2 L443.8,230.0 L437.0,230.0 L432.3,225.2 L432.3,218.5 L437.0,213.7 L443.8,213.7 L448.5,218.5 Z" fill="none" stroke="#ff0000" stroke-width="1.2"/><circle cx="326.4" cy="238.1" r="7.6" fill="#00b400"/><circle cx="326.4" cy="238.1" r="2.8" fill="#000"/><path d="M334.5,241.5 L329.8,246.2 L323.0,246.2 L318.3,241.5 L318.3,234.7 L323.0,230.0 L329.8,230.0 L334.5,234.7 Z" fill="none" stroke="#ff0000" stroke-width="1.2"/><circle cx="342.7" cy="238.1" r="7.6" fill="#00b400"/><circle cx="342.7" cy="238.1" r="2.8" fill="#000"/><path d="M350.8,241.5 L346.1,246.2 L339.3,246.2 L334.6,241.5 L334.6,234.7 L339.3,230.0 L346.1,230.0 L350.8,234.7 Z" fill="none" stroke="#ff0000" stroke-width="1.2"/><circle cx="440.4" cy="238.1" r="7.6" fill="#00b400"/><circle cx="440.4" cy="238.1" r="2.8" fill="#000"/><path d="M448.5,241.5 L443.8,246.2 L437.0,246.2 L432.3,241.5 L432.3,234.7 L437.0,230.0 L443.8,230.0 L448.5,234.7 Z" fill="none" stroke="#ff0000" stroke-width="1.2"/><circle cx="326.4" cy="254.35" r="7.6" fill="#00b400"/><circle cx="326.4" cy="254.35" r="2.8" fill="#000"/><path d="M334.5,257.7 L329.8,262.5 L323.0,262.5 L318.3,257.7 L318.3,251.0 L323.0,246.2 L329.8,246.2 L334.5,251.0 Z" fill="none" stroke="#ff0000" stroke-width="1.2"/><circle cx="342.7" cy="254.35" r="7.6" fill="#00b400"/><circle cx="342.7" cy="254.35" r="2.8" fill="#000"/><path d="M350.8,257.7 L346.1,262.5 L339.3,262.5 L334.6,257.7 L334.6,251.0 L339.3,246.2 L346.1,246.2 L350.8,251.0 Z" fill="none" stroke="#ff0000" stroke-width="1.2"/><circle cx="440.4" cy="254.35" r="7.6" fill="#00b400"/><circle cx="440.4" cy="254.35" r="2.8" fill="#000"/><path d="M448.5,257.7 L443.8,262.5 L437.0,262.5 L432.3,257.7 L432.3,251.0 L437.0,246.2 L443.8,246.2 L448.5,251.0 Z" fill="none" stroke="#ff0000" stroke-width="1.2"/><circle cx="326.4" cy="270.6" r="7.6" fill="#00b400"/><circle cx="326.4" cy="270.6" r="2.8" fill="#000"/><path d="M334.5,274.0 L329.8,278.7 L323.0,278.7 L318.3,274.0 L318.3,267.2 L323.0,262.5 L329.8,262.5 L334.5,267.2 Z" fill="none" stroke="#ff0000" stroke-width="1.2"/><circle cx="342.7" cy="270.6" r="7.6" fill="#00b400"/><circle cx="342.7" cy="270.6" r="2.8" fill="#000"/><path d="M350.8,274.0 L346.1,278.7 L339.3,278.7 L334.6,274.0 L334.6,267.2 L339.3,262.5 L346.1,262.5 L350.8,267.2 Z" fill="none" stroke="#ff0000" stroke-width="1.2"/><circle cx="440.4" cy="270.6" r="7.6" fill="#00b400"/><circle cx="440.4" cy="270.6" r="2.8" fill="#000"/><path d="M448.5,274.0 L443.8,278.7 L437.0,278.7 L432.3,274.0 L432.3,267.2 L437.0,262.5 L443.8,262.5 L448.5,267.2 Z" fill="none" stroke="#ff0000" stroke-width="1.2"/><circle cx="326.4" cy="286.85" r="7.6" fill="#00b400"/><circle cx="326.4" cy="286.85" r="2.8" fill="#000"/><path d="M334.5,290.2 L329.8,295.0 L323.0,295.0 L318.3,290.2 L318.3,283.5 L323.0,278.7 L329.8,278.7 L334.5,283.5 Z" fill="none" stroke="#ff0000" stroke-width="1.2"/><circle cx="342.7" cy="286.85" r="7.6" fill="#00b400"/><circle cx="342.7" cy="286.85" r="2.8" fill="#000"/><path d="M350.8,290.2 L346.1,295.0 L339.3,295.0 L334.6,290.2 L334.6,283.5 L339.3,278.7 L346.1,278.7 L350.8,283.5 Z" fill="none" stroke="#ff0000" stroke-width="1.2"/><circle cx="440.4" cy="286.85" r="7.6" fill="#00b400"/><circle cx="440.4" cy="286.85" r="2.8" fill="#000"/><path d="M448.5,290.2 L443.8,295.0 L437.0,295.0 L432.3,290.2 L432.3,283.5 L437.0,278.7 L443.8,278.7 L448.5,283.5 Z" fill="none" stroke="#ff0000" stroke-width="1.2"/><circle cx="326.4" cy="303.1" r="7.6" fill="#00b400"/><circle cx="326.4" cy="303.1" r="2.8" fill="#000"/><path d="M334.5,306.5 L329.8,311.2 L323.0,311.2 L318.3,306.5 L318.3,299.7 L323.0,295.0 L329.8,295.0 L334.5,299.7 Z" fill="none" stroke="#ff0000" stroke-width="1.2"/><circle cx="342.7" cy="303.1" r="7.6" fill="#00b400"/><circle cx="342.7" cy="303.1" r="2.8" fill="#000"/><path d="M350.8,306.5 L346.1,311.2 L339.3,311.2 L334.6,306.5 L334.6,299.7 L339.3,295.0 L346.1,295.0 L350.8,299.7 Z" fill="none" stroke="#ff0000" stroke-width="1.2"/><circle cx="440.4" cy="303.1" r="7.6" fill="#00b400"/><circle cx="440.4" cy="303.1" r="2.8" fill="#000"/><path d="M448.5,306.5 L443.8,311.2 L437.0,311.2 L432.3,306.5 L432.3,299.7 L437.0,295.0 L443.8,295.0 L448.5,299.7 Z" fill="none" stroke="#ff0000" stroke-width="1.2"/><circle cx="326.4" cy="319.35" r="7.6" fill="#00b400"/><circle cx="326.4" cy="319.35" r="2.8" fill="#000"/><path d="M334.5,322.7 L329.8,327.5 L323.0,327.5 L318.3,322.7 L318.3,316.0 L323.0,311.2 L329.8,311.2 L334.5,316.0 Z" fill="none" stroke="#ff0000" stroke-width="1.2"/><circle cx="342.7" cy="319.35" r="7.6" fill="#00b400"/><circle cx="342.7" cy="319.35" r="2.8" fill="#000"/><path d="M350.8,322.7 L346.1,327.5 L339.3,327.5 L334.6,322.7 L334.6,316.0 L339.3,311.2 L346.1,311.2 L350.8,316.0 Z" fill="none" stroke="#ff0000" stroke-width="1.2"/><circle cx="440.4" cy="319.35" r="7.6" fill="#00b400"/><circle cx="440.4" cy="319.35" r="2.8" fill="#000"/><path d="M448.5,322.7 L443.8,327.5 L437.0,327.5 L432.3,322.7 L432.3,316.0 L437.0,311.2 L443.8,311.2 L448.5,316.0 Z" fill="none" stroke="#ff0000" stroke-width="1.2"/><circle cx="326.4" cy="335.6" r="7.6" fill="#00b400"/><circle cx="326.4" cy="335.6" r="2.8" fill="#000"/><path d="M334.5,339.0 L329.8,343.7 L323.0,343.7 L318.3,339.0 L318.3,332.2 L323.0,327.5 L329.8,327.5 L334.5,332.2 Z" fill="none" stroke="#ff0000" stroke-width="1.2"/><circle cx="342.7" cy="335.6" r="7.6" fill="#00b400"/><circle cx="342.7" cy="335.6" r="2.8" fill="#000"/><path d="M350.8,339.0 L346.1,343.7 L339.3,343.7 L334.6,339.0 L334.6,332.2 L339.3,327.5 L346.1,327.5 L350.8,332.2 Z" fill="none" stroke="#ff0000" stroke-width="1.2"/><circle cx="440.4" cy="335.6" r="7.6" fill="#00b400"/><circle cx="440.4" cy="335.6" r="2.8" fill="#000"/><path d="M448.5,339.0 L443.8,343.7 L437.0,343.7 L432.3,339.0 L432.3,332.2 L437.0,327.5 L443.8,327.5 L448.5,332.2 Z" fill="none" stroke="#ff0000" stroke-width="1.2"/><circle cx="326.4" cy="351.85" r="7.6" fill="#00b400"/><circle cx="326.4" cy="351.85" r="2.8" fill="#000"/><path d="M334.5,355.2 L329.8,360.0 L323.0,360.0 L318.3,355.2 L318.3,348.5 L323.0,343.7 L329.8,343.7 L334.5,348.5 Z" fill="none" stroke="#ff0000" stroke-width="1.2"/><circle cx="342.7" cy="351.85" r="7.6" fill="#00b400"/><circle cx="342.7" cy="351.85" r="2.8" fill="#000"/><path d="M350.8,355.2 L346.1,360.0 L339.3,360.0 L334.6,355.2 L334.6,348.5 L339.3,343.7 L346.1,343.7 L350.8,348.5 Z" fill="none" stroke="#ff0000" stroke-width="1.2"/><circle cx="440.4" cy="351.85" r="7.6" fill="#00b400"/><circle cx="440.4" cy="351.85" r="2.8" fill="#000"/><path d="M448.5,355.2 L443.8,360.0 L437.0,360.0 L432.3,355.2 L432.3,348.5 L437.0,343.7 L443.8,343.7 L448.5,348.5 Z" fill="none" stroke="#ff0000" stroke-width="1.2"/><circle cx="326.4" cy="368.1" r="7.6" fill="#00b400"/><circle cx="326.4" cy="368.1" r="2.8" fill="#000"/><path d="M334.5,371.5 L329.8,376.2 L323.0,376.2 L318.3,371.5 L318.3,364.7 L323.0,360.0 L329.8,360.0 L334.5,364.7 Z" fill="none" stroke="#ff0000" stroke-width="1.2"/><circle cx="342.7" cy="368.1" r="7.6" fill="#00b400"/><circle cx="342.7" cy="368.1" r="2.8" fill="#000"/><path d="M350.8,371.5 L346.1,376.2 L339.3,376.2 L334.6,371.5 L334.6,364.7 L339.3,360.0 L346.1,360.0 L350.8,364.7 Z" fill="none" stroke="#ff0000" stroke-width="1.2"/><circle cx="440.4" cy="368.1" r="7.6" fill="#00b400"/><circle cx="440.4" cy="368.1" r="2.8" fill="#000"/><path d="M448.5,371.5 L443.8,376.2 L437.0,376.2 L432.3,371.5 L432.3,364.7 L437.0,360.0 L443.8,360.0 L448.5,364.7 Z" fill="none" stroke="#ff0000" stroke-width="1.2"/><circle cx="326.4" cy="384.35" r="7.6" fill="#00b400"/><circle cx="326.4" cy="384.35" r="2.8" fill="#000"/><path d="M334.5,387.7 L329.8,392.5 L323.0,392.5 L318.3,387.7 L318.3,381.0 L323.0,376.2 L329.8,376.2 L334.5,381.0 Z" fill="none" stroke="#ff0000" stroke-width="1.2"/><circle cx="342.7" cy="384.35" r="7.6" fill="#00b400"/><circle cx="342.7" cy="384.35" r="2.8" fill="#000"/><path d="M350.8,387.7 L346.1,392.5 L339.3,392.5 L334.6,387.7 L334.6,381.0 L339.3,376.2 L346.1,376.2 L350.8,381.0 Z" fill="none" stroke="#ff0000" stroke-width="1.2"/><circle cx="440.4" cy="384.35" r="7.6" fill="#00b400"/><circle cx="440.4" cy="384.35" r="2.8" fill="#000"/><path d="M448.5,387.7 L443.8,392.5 L437.0,392.5 L432.3,387.7 L432.3,381.0 L437.0,376.2 L443.8,376.2 L448.5,381.0 Z" fill="none" stroke="#ff0000" stroke-width="1.2"/><circle cx="326.4" cy="400.6" r="7.6" fill="#00b400"/><circle cx="326.4" cy="400.6" r="2.8" fill="#000"/><path d="M334.5,404.0 L329.8,408.7 L323.0,408.7 L318.3,404.0 L318.3,397.2 L323.0,392.5 L329.8,392.5 L334.5,397.2 Z" fill="none" stroke="#ff0000" stroke-width="1.2"/><circle cx="342.7" cy="400.6" r="7.6" fill="#00b400"/><circle cx="342.7" cy="400.6" r="2.8" fill="#000"/><path d="M350.8,404.0 L346.1,408.7 L339.3,408.7 L334.6,404.0 L334.6,397.2 L339.3,392.5 L346.1,392.5 L350.8,397.2 Z" fill="none" stroke="#ff0000" stroke-width="1.2"/><circle cx="440.4" cy="400.6" r="7.6" fill="#00b400"/><circle cx="440.4" cy="400.6" r="2.8" fill="#000"/><path d="M448.5,404.0 L443.8,408.7 L437.0,408.7 L432.3,404.0 L432.3,397.2 L437.0,392.5 L443.8,392.5 L448.5,397.2 Z" fill="none" stroke="#ff0000" stroke-width="1.2"/><circle cx="376.5" cy="161.4" r="7.8" fill="#52e0f8"/><circle cx="376.5" cy="161.4" r="3" fill="#000"/><circle cx="393" cy="161.4" r="7.8" fill="#52e0f8"/><circle cx="393" cy="161.4" r="3" fill="#000"/><circle cx="409" cy="161.4" r="7.8" fill="#52e0f8"/><circle cx="409" cy="161.4" r="3" fill="#000"/><circle cx="376.5" cy="301.9" r="7.8" fill="#52e0f8"/><circle cx="376.5" cy="301.9" r="3" fill="#000"/><circle cx="393" cy="301.9" r="7.8" fill="#52e0f8"/><circle cx="393" cy="301.9" r="3" fill="#000"/><circle cx="409" cy="301.9" r="7.8" fill="#52e0f8"/><circle cx="409" cy="301.9" r="3" fill="#000"/><circle cx="376.5" cy="444.6" r="7.8" fill="#52e0f8"/><circle cx="376.5" cy="444.6" r="3" fill="#000"/><circle cx="393" cy="444.6" r="7.8" fill="#52e0f8"/><circle cx="393" cy="444.6" r="3" fill="#000"/><circle cx="409" cy="444.6" r="7.8" fill="#52e0f8"/><circle cx="409" cy="444.6" r="3" fill="#000"/><rect x="492.2" y="167.7" width="12" height="12" fill="#00b400"/><circle cx="498.2" cy="173.7" r="2.3" fill="#000"/><circle cx="498.2" cy="189.7" r="6" fill="#00b400"/><circle cx="498.2" cy="189.7" r="2.3" fill="#000"/><circle cx="498.2" cy="206.1" r="6" fill="#00b400"/><circle cx="498.2" cy="206.1" r="2.3" fill="#000"/><circle cx="498.2" cy="222" r="6" fill="#00b400"/><circle cx="498.2" cy="222" r="2.3" fill="#000"/><circle cx="514.6" cy="173.7" r="6" fill="#00b400"/><circle cx="514.6" cy="173.7" r="2.3" fill="#000"/><circle cx="514.6" cy="189.7" r="6" fill="#00b400"/><circle cx="514.6" cy="189.7" r="2.3" fill="#000"/><circle cx="514.6" cy="206.1" r="6" fill="#00b400"/><circle cx="514.6" cy="206.1" r="2.3" fill="#000"/><circle cx="514.6" cy="222" r="6" fill="#00b400"/><circle cx="514.6" cy="222" r="2.3" fill="#000"/><circle cx="536.8" cy="185.5" r="6" fill="#00b400"/><circle cx="536.8" cy="185.5" r="2.3" fill="#000"/><circle cx="536.8" cy="234.2" r="6" fill="#00b400"/><circle cx="536.8" cy="234.2" r="2.3" fill="#000"/><circle cx="530.8" cy="301.9" r="6" fill="#00b400"/><circle cx="530.8" cy="301.9" r="2.3" fill="#000"/><circle cx="530.6" cy="350.3" r="6" fill="#00b400"/><circle cx="530.6" cy="350.3" r="2.3" fill="#000"/><circle cx="535.2" cy="412" r="6" fill="#00b400"/><circle cx="535.2" cy="412" r="2.3" fill="#000"/><circle cx="534.9" cy="460.2" r="6" fill="#00b400"/><circle cx="534.9" cy="460.2" r="2.3" fill="#000"/><circle cx="591.6" cy="167.8" r="9.5" fill="#00b400"/><circle cx="591.6" cy="167.8" r="3.5" fill="#000"/><circle cx="579.5" cy="200.4" r="9.5" fill="#00b400"/><circle cx="579.5" cy="200.4" r="3.5" fill="#000"/><circle cx="591.6" cy="232.7" r="9.5" fill="#00b400"/><circle cx="591.6" cy="232.7" r="3.5" fill="#000"/><circle cx="668.7" cy="167.8" r="9.5" fill="#00b400"/><circle cx="668.7" cy="167.8" r="3.5" fill="#000"/><circle cx="668.7" cy="232.7" r="9.5" fill="#00b400"/><circle cx="668.7" cy="232.7" r="3.5" fill="#000"/><rect x="558.75" y="147.1" width="142.85000000000002" height="105.70000000000002" fill="none" stroke="#ff0000" stroke-width="3"/><path d="M612,171 L612,233.6" fill="none" stroke="#ff0000" stroke-width="1.2"/><rect x="603.3" y="212" width="17.200000000000045" height="9" fill="none" stroke="#ff0000" stroke-width="1.2"/><path d="M599.4,200.4 L624.8,200.4 L640.4,184.8" fill="none" stroke="#ff0000" stroke-width="1.2"/><path d="M636.5,190 L636.5,181 L657,181 L657,172" fill="none" stroke="#ff0000" stroke-width="1.2"/><path d="M636.5,204.3 L636.5,217 L657,217 L657,224.8" fill="none" stroke="#ff0000" stroke-width="1.2"/><text x="593.5" y="188" font-size="12" fill="#ff0000" text-anchor="start" >5</text><text x="593.5" y="204.5" font-size="12" fill="#ff0000" text-anchor="start" >1</text><text x="593.5" y="221" font-size="12" fill="#ff0000" text-anchor="start" >2</text><text x="679.5" y="191.8" font-size="12" fill="#ff0000" text-anchor="start" >4</text><text x="679.5" y="225" font-size="12" fill="#ff0000" text-anchor="start" >3</text><circle cx="591.6" cy="283.9" r="9.5" fill="#00b400"/><circle cx="591.6" cy="283.9" r="3.5" fill="#000"/><circle cx="579.5" cy="316.5" r="9.5" fill="#00b400"/><circle cx="579.5" cy="316.5" r="3.5" fill="#000"/><circle cx="591.6" cy="348.79999999999995" r="9.5" fill="#00b400"/><circle cx="591.6" cy="348.79999999999995" r="3.5" fill="#000"/><circle cx="668.7" cy="283.9" r="9.5" fill="#00b400"/><circle cx="668.7" cy="283.9" r="3.5" fill="#000"/><circle cx="668.7" cy="348.79999999999995" r="9.5" fill="#00b400"/><circle cx="668.7" cy="348.79999999999995" r="3.5" fill="#000"/><rect x="558.75" y="263.2" width="142.85000000000002" height="105.69999999999999" fill="none" stroke="#ff0000" stroke-width="3"/><path d="M612,287.1 L612,349.7" fill="none" stroke="#ff0000" stroke-width="1.2"/><rect x="603.3" y="328.1" width="17.200000000000045" height="9.0" fill="none" stroke="#ff0000" stroke-width="1.2"/><path d="M599.4,316.5 L624.8,316.5 L640.4,300.9" fill="none" stroke="#ff0000" stroke-width="1.2"/><path d="M636.5,306.1 L636.5,297.1 L657,297.1 L657,288.1" fill="none" stroke="#ff0000" stroke-width="1.2"/><path d="M636.5,320.4 L636.5,333.1 L657,333.1 L657,340.9" fill="none" stroke="#ff0000" stroke-width="1.2"/><text x="593.5" y="304.1" font-size="12" fill="#ff0000" text-anchor="start" >5</text><text x="593.5" y="320.6" font-size="12" fill="#ff0000" text-anchor="start" >1</text><text x="593.5" y="337.1" font-size="12" fill="#ff0000" text-anchor="start" >2</text><text x="679.5" y="307.9" font-size="12" fill="#ff0000" text-anchor="start" >4</text><text x="679.5" y="341.1" font-size="12" fill="#ff0000" text-anchor="start" >3</text><circle cx="591.6" cy="397.20000000000005" r="9.5" fill="#00b400"/><circle cx="591.6" cy="397.20000000000005" r="3.5" fill="#000"/><circle cx="579.5" cy="429.8" r="9.5" fill="#00b400"/><circle cx="579.5" cy="429.8" r="3.5" fill="#000"/><circle cx="591.6" cy="462.1" r="9.5" fill="#00b400"/><circle cx="591.6" cy="462.1" r="3.5" fill="#000"/><circle cx="668.7" cy="397.20000000000005" r="9.5" fill="#00b400"/><circle cx="668.7" cy="397.20000000000005" r="3.5" fill="#000"/><circle cx="668.7" cy="462.1" r="9.5" fill="#00b400"/><circle cx="668.7" cy="462.1" r="3.5" fill="#000"/><rect x="558.75" y="376.5" width="142.85000000000002" height="106.5" fill="none" stroke="#ff0000" stroke-width="3"/><path d="M612,400.4 L612,463.0" fill="none" stroke="#ff0000" stroke-width="1.2"/><rect x="603.3" y="441.4" width="17.200000000000045" height="9.0" fill="none" stroke="#ff0000" stroke-width="1.2"/><path d="M599.4,429.8 L624.8,429.8 L640.4,414.20000000000005" fill="none" stroke="#ff0000" stroke-width="1.2"/><path d="M636.5,419.4 L636.5,410.4 L657,410.4 L657,401.4" fill="none" stroke="#ff0000" stroke-width="1.2"/><path d="M636.5,433.70000000000005 L636.5,446.4 L657,446.4 L657,454.20000000000005" fill="none" stroke="#ff0000" stroke-width="1.2"/><text x="593.5" y="417.4" font-size="12" fill="#ff0000" text-anchor="start" >5</text><text x="593.5" y="433.9" font-size="12" fill="#ff0000" text-anchor="start" >1</text><text x="593.5" y="450.4" font-size="12" fill="#ff0000" text-anchor="start" >2</text><text x="679.5" y="421.20000000000005" font-size="12" fill="#ff0000" text-anchor="start" >4</text><text x="679.5" y="454.4" font-size="12" fill="#ff0000" text-anchor="start" >3</text><circle cx="520.4" cy="256.6" r="6.5" fill="#00b400"/><circle cx="520.4" cy="256.6" r="2.3" fill="#000"/><circle cx="503.9" cy="272.90000000000003" r="6.5" fill="#00b400"/><circle cx="503.9" cy="272.90000000000003" r="2.3" fill="#000"/><circle cx="536.9" cy="272.90000000000003" r="6.5" fill="#00b400"/><circle cx="536.9" cy="272.90000000000003" r="2.3" fill="#000"/><path d="M520.4,256.6 L503.9,272.90000000000003 L536.9,272.90000000000003 L520.4,256.6" fill="none" stroke="#ff0000" stroke-width="3.6"/><text x="504.9" y="288.90000000000003" font-size="9" fill="#ff0000" text-anchor="middle" >C</text><text x="522.4" y="288.90000000000003" font-size="9" fill="#ff0000" text-anchor="middle" >B</text><text x="539.4" y="288.90000000000003" font-size="9" fill="#ff0000" text-anchor="middle" >E</text><circle cx="510.3" cy="371.8" r="6.5" fill="#00b400"/><circle cx="510.3" cy="371.8" r="2.3" fill="#000"/><circle cx="493.8" cy="388.1" r="6.5" fill="#00b400"/><circle cx="493.8" cy="388.1" r="2.3" fill="#000"/><circle cx="526.8" cy="388.1" r="6.5" fill="#00b400"/><circle cx="526.8" cy="388.1" r="2.3" fill="#000"/><path d="M510.3,371.8 L493.8,388.1 L526.8,388.1 L510.3,371.8" fill="none" stroke="#ff0000" stroke-width="3.6"/><text x="494.8" y="404.1" font-size="9" fill="#ff0000" text-anchor="middle" >C</text><text x="512.3" y="404.1" font-size="9" fill="#ff0000" text-anchor="middle" >B</text><text x="529.3" y="404.1" font-size="9" fill="#ff0000" text-anchor="middle" >E</text><circle cx="504.5" cy="456.25" r="6.5" fill="#00b400"/><circle cx="504.5" cy="456.25" r="2.3" fill="#000"/><circle cx="488.0" cy="472.55" r="6.5" fill="#00b400"/><circle cx="488.0" cy="472.55" r="2.3" fill="#000"/><circle cx="521.0" cy="472.55" r="6.5" fill="#00b400"/><circle cx="521.0" cy="472.55" r="2.3" fill="#000"/><path d="M504.5,456.25 L488.0,472.55 L521.0,472.55 L504.5,456.25" fill="none" stroke="#ff0000" stroke-width="3.6"/><text x="489.0" y="488.55" font-size="9" fill="#ff0000" text-anchor="middle" >C</text><text x="506.5" y="488.55" font-size="9" fill="#ff0000" text-anchor="middle" >B</text><text x="523.5" y="488.55" font-size="9" fill="#ff0000" text-anchor="middle" >E</text><rect x="498" y="237" width="9" height="11" fill="#2070ff"/><rect x="509" y="237" width="9" height="11" fill="#2070ff"/><rect x="496" y="236" width="24.5" height="13" fill="none" stroke="#ff0000" stroke-width="1.2"/><rect x="494.3" y="341.5" width="9" height="11" fill="#2070ff"/><rect x="505.3" y="341.5" width="9" height="11" fill="#2070ff"/><rect x="492.3" y="340.5" width="24.499999999999943" height="13.0" fill="none" stroke="#ff0000" stroke-width="1.2"/><rect x="496.2" y="424.4" width="9" height="11" fill="#2070ff"/><rect x="507.2" y="424.4" width="9" height="11" fill="#2070ff"/><rect x="494.2" y="423.4" width="24.500000000000057" height="13.0" fill="none" stroke="#ff0000" stroke-width="1.2"/><text x="507" y="249" font-size="13" fill="#ff0000" text-anchor="start" textLength="36.5" lengthAdjust="spacingAndGlyphs" >BC337</text><text x="496" y="364" font-size="13" fill="#ff0000" text-anchor="start" textLength="36.5" lengthAdjust="spacingAndGlyphs" >BC337</text><text x="490" y="447.5" font-size="13" fill="#ff0000" text-anchor="start" textLength="36.5" lengthAdjust="spacingAndGlyphs" >BC337</text><circle cx="747.9" cy="174" r="9.2" fill="#52e0f8"/><circle cx="747.9" cy="174" r="3.4" fill="#000"/><circle cx="747.9" cy="174" r="9.3" fill="none" stroke="#ff0000" stroke-width="1.5"/><path d="M738.9,174 L756.9,174" fill="none" stroke="#ff0000" stroke-width="1.5"/><circle cx="747.9" cy="206.3" r="9.2" fill="#52e0f8"/><circle cx="747.9" cy="206.3" r="3.4" fill="#000"/><circle cx="747.9" cy="206.3" r="9.3" fill="none" stroke="#ff0000" stroke-width="1.5"/><path d="M738.9,206.3 L756.9,206.3" fill="none" stroke="#ff0000" stroke-width="1.5"/><circle cx="750.4" cy="267.8" r="9.2" fill="#52e0f8"/><circle cx="750.4" cy="267.8" r="3.4" fill="#000"/><circle cx="750.4" cy="267.8" r="9.3" fill="none" stroke="#ff0000" stroke-width="1.5"/><path d="M741.4,267.8 L759.4,267.8" fill="none" stroke="#ff0000" stroke-width="1.5"/><circle cx="750.4" cy="299.5" r="9.2" fill="#52e0f8"/><circle cx="750.4" cy="299.5" r="3.4" fill="#000"/><circle cx="750.4" cy="299.5" r="9.3" fill="none" stroke="#ff0000" stroke-width="1.5"/><path d="M741.4,299.5 L759.4,299.5" fill="none" stroke="#ff0000" stroke-width="1.5"/><circle cx="752.3" cy="376.7" r="9.2" fill="#52e0f8"/><circle cx="752.3" cy="376.7" r="3.4" fill="#000"/><circle cx="752.3" cy="376.7" r="9.3" fill="none" stroke="#ff0000" stroke-width="1.5"/><path d="M743.3,376.7 L761.3,376.7" fill="none" stroke="#ff0000" stroke-width="1.5"/><circle cx="752.3" cy="409.3" r="9.2" fill="#52e0f8"/><circle cx="752.3" cy="409.3" r="3.4" fill="#000"/><circle cx="752.3" cy="409.3" r="9.3" fill="none" stroke="#ff0000" stroke-width="1.5"/><path d="M743.3,409.3 L761.3,409.3" fill="none" stroke="#ff0000" stroke-width="1.5"/><circle cx="752.2" cy="476.4" r="9.2" fill="#52e0f8"/><circle cx="752.2" cy="476.4" r="3.4" fill="#000"/><circle cx="752.2" cy="476.4" r="9.3" fill="none" stroke="#ff0000" stroke-width="1.5"/><path d="M743.2,476.4 L761.2,476.4" fill="none" stroke="#ff0000" stroke-width="1.5"/><circle cx="752.2" cy="509.6" r="9.2" fill="#52e0f8"/><circle cx="752.2" cy="509.6" r="3.4" fill="#000"/><circle cx="752.2" cy="509.6" r="9.3" fill="none" stroke="#ff0000" stroke-width="1.5"/><path d="M743.2,509.6 L761.2,509.6" fill="none" stroke="#ff0000" stroke-width="1.5"/><circle cx="752.2" cy="541.7" r="9.2" fill="#52e0f8"/><circle cx="752.2" cy="541.7" r="3.4" fill="#000"/><circle cx="752.2" cy="541.7" r="9.3" fill="none" stroke="#ff0000" stroke-width="1.5"/><path d="M743.2,541.7 L761.2,541.7" fill="none" stroke="#ff0000" stroke-width="1.5"/><circle cx="325.4" cy="454" r="9.2" fill="#52e0f8"/><circle cx="325.4" cy="454" r="3.4" fill="#000"/><circle cx="325.4" cy="454" r="9.3" fill="none" stroke="#ff0000" stroke-width="1.5"/><path d="M316.4,454 L334.4,454" fill="none" stroke="#ff0000" stroke-width="1.5"/><circle cx="325.4" cy="486.25" r="9.2" fill="#52e0f8"/><circle cx="325.4" cy="486.25" r="3.4" fill="#000"/><circle cx="325.4" cy="486.25" r="9.3" fill="none" stroke="#ff0000" stroke-width="1.5"/><path d="M316.4,486.25 L334.4,486.25" fill="none" stroke="#ff0000" stroke-width="1.5"/><circle cx="325.4" cy="519.2" r="9.2" fill="#52e0f8"/><circle cx="325.4" cy="519.2" r="3.4" fill="#000"/><circle cx="325.4" cy="519.2" r="9.3" fill="none" stroke="#ff0000" stroke-width="1.5"/><path d="M316.4,519.2 L334.4,519.2" fill="none" stroke="#ff0000" stroke-width="1.5"/><rect x="723.4" y="158" width="49.80000000000007" height="64.9" fill="none" stroke="#ff0000" stroke-width="2"/><rect x="764" y="165" width="8" height="17" fill="none" stroke="#ff0000" stroke-width="1.2"/><rect x="764" y="199" width="8" height="17" fill="none" stroke="#ff0000" stroke-width="1.2"/><path d="M731.6,190.7 L765,190.7" fill="none" stroke="#ff0000" stroke-width="1.5"/><rect x="725.6" y="251.2" width="49.19999999999993" height="64.90000000000003" fill="none" stroke="#ff0000" stroke-width="2"/><rect x="766" y="259" width="8" height="17" fill="none" stroke="#ff0000" stroke-width="1.2"/><rect x="766" y="291" width="8" height="17" fill="none" stroke="#ff0000" stroke-width="1.2"/><path d="M733,283.5 L767,283.5" fill="none" stroke="#ff0000" stroke-width="1.5"/><rect x="727.3" y="360.5" width="49.450000000000045" height="65.5" fill="none" stroke="#ff0000" stroke-width="2"/><rect x="768" y="368" width="8" height="17" fill="none" stroke="#ff0000" stroke-width="1.2"/><rect x="768" y="401" width="8" height="17" fill="none" stroke="#ff0000" stroke-width="1.2"/><path d="M735,392.8 L770,392.8" fill="none" stroke="#ff0000" stroke-width="1.5"/><rect x="727.9" y="460.5" width="49.10000000000002" height="97.79999999999995" fill="none" stroke="#ff0000" stroke-width="2"/><path d="M727.9,492.6 L777,492.6" fill="none" stroke="#ff0000" stroke-width="2"/><path d="M727.9,525.75 L777,525.75" fill="none" stroke="#ff0000" stroke-width="2"/><rect x="768" y="468" width="9" height="16" fill="none" stroke="#ff0000" stroke-width="1.2"/><rect x="768" y="501" width="9" height="16" fill="none" stroke="#ff0000" stroke-width="1.2"/><rect x="768" y="534" width="9" height="16" fill="none" stroke="#ff0000" stroke-width="1.2"/><rect x="300.4" y="437.9" width="50.0" height="98.35000000000002" fill="none" stroke="#ff0000" stroke-width="2"/><path d="M300.4,470.6 L350.4,470.6" fill="none" stroke="#ff0000" stroke-width="2"/><path d="M300.4,502.9 L350.4,502.9" fill="none" stroke="#ff0000" stroke-width="2"/><rect x="300.4" y="446" width="9.600000000000023" height="16" fill="none" stroke="#ff0000" stroke-width="1.2"/><rect x="300.4" y="479" width="9.600000000000023" height="16" fill="none" stroke="#ff0000" stroke-width="1.2"/><rect x="300.4" y="511" width="9.600000000000023" height="16" fill="none" stroke="#ff0000" stroke-width="1.2"/><circle cx="691.2" cy="443.9" r="8" fill="#52e0f8"/><circle cx="691.2" cy="443.9" r="3.1" fill="#000"/><circle cx="752.2" cy="443.9" r="8" fill="#52e0f8"/><circle cx="752.2" cy="443.9" r="3.1" fill="#000"/><circle cx="696.2" cy="516.2" r="8" fill="#52e0f8"/><circle cx="696.2" cy="516.2" r="3.1" fill="#000"/><circle cx="696.2" cy="532.4" r="8" fill="#52e0f8"/><circle cx="696.2" cy="532.4" r="3.1" fill="#000"/><circle cx="696.2" cy="548.3" r="8" fill="#52e0f8"/><circle cx="696.2" cy="548.3" r="3.1" fill="#000"/><circle cx="543.2" cy="508.6" r="20.5" fill="none" stroke="#ff0000" stroke-width="1.2"/><rect x="537.7" y="495.7" width="11" height="11" fill="#52e0f8"/><circle cx="543.2" cy="501.2" r="2.5" fill="#000"/><circle cx="543.2" cy="517.3" r="6.5" fill="#52e0f8"/><circle cx="543.2" cy="517.3" r="2.5" fill="#000"/><circle cx="543.2" cy="551.7" r="20.5" fill="none" stroke="#ff0000" stroke-width="1.2"/><rect x="537.7" y="554.3" width="11" height="11" fill="#52e0f8"/><circle cx="543.2" cy="559.8" r="2.5" fill="#000"/><circle cx="543.2" cy="543.7" r="6.5" fill="#52e0f8"/><circle cx="543.2" cy="543.7" r="2.5" fill="#000"/><circle cx="465.6" cy="515.1" r="5.5" fill="#00b400"/><circle cx="465.6" cy="515.1" r="2" fill="#000"/><circle cx="465.6" cy="531.2" r="5.5" fill="#00b400"/><circle cx="465.6" cy="531.2" r="2" fill="#000"/><circle cx="465.6" cy="548.1" r="5.5" fill="#00b400"/><circle cx="465.6" cy="548.1" r="2" fill="#000"/><circle cx="514.7" cy="515.1" r="5.5" fill="#00b400"/><circle cx="514.7" cy="515.1" r="2" fill="#000"/><circle cx="514.7" cy="531.2" r="5.5" fill="#00b400"/><circle cx="514.7" cy="531.2" r="2" fill="#000"/><circle cx="514.7" cy="548.1" r="5.5" fill="#00b400"/><circle cx="514.7" cy="548.1" r="2" fill="#000"/><path d="M465.6,507.1 L514.7,507.1 L514.7,556.1 L488,556.1 L488,548 L476,548 L476,556.1 L465.6,556.1 L465.6,507.1" fill="none" stroke="#ff0000" stroke-width="1.5"/><rect x="359.3" y="189.3" width="66.39999999999998" height="99.5" fill="none" stroke="#ff0000" stroke-width="1.5"/><path d="M359.3,248.3 L425.7,248.3" fill="none" stroke="#ff0000" stroke-width="1.5"/><circle cx="392.5" cy="269.55" r="11.7" fill="none" stroke="#ff0000" stroke-width="1.2"/><rect x="359.3" y="329.8" width="66.39999999999998" height="100.19999999999999" fill="none" stroke="#ff0000" stroke-width="1.5"/><path d="M359.3,388.4 L425.7,388.4" fill="none" stroke="#ff0000" stroke-width="1.5"/><circle cx="392.5" cy="410.2" r="11.7" fill="none" stroke="#ff0000" stroke-width="1.2"/><rect x="359.3" y="471.7" width="66.39999999999998" height="100.00000000000006" fill="none" stroke="#ff0000" stroke-width="1.5"/><path d="M359.3,530.6 L425.7,530.6" fill="none" stroke="#ff0000" stroke-width="1.5"/><circle cx="392.5" cy="552.1500000000001" r="11.7" fill="none" stroke="#ff0000" stroke-width="1.2"/><rect x="372.0" y="163.4" width="9.0" height="25.900000000000006" fill="none" stroke="#ff0000" stroke-width="1.2"/><rect x="388.5" y="163.4" width="9.0" height="25.900000000000006" fill="none" stroke="#ff0000" stroke-width="1.2"/><rect x="404.5" y="163.4" width="9.0" height="25.900000000000006" fill="none" stroke="#ff0000" stroke-width="1.2"/><rect x="372.0" y="303.9" width="9.0" height="25.0" fill="none" stroke="#ff0000" stroke-width="1.2"/><rect x="388.5" y="303.9" width="9.0" height="25.0" fill="none" stroke="#ff0000" stroke-width="1.2"/><rect x="404.5" y="303.9" width="9.0" height="25.0" fill="none" stroke="#ff0000" stroke-width="1.2"/><rect x="372.0" y="446.6" width="9.0" height="25.0" fill="none" stroke="#ff0000" stroke-width="1.2"/><rect x="388.5" y="446.6" width="9.0" height="25.0" fill="none" stroke="#ff0000" stroke-width="1.2"/><rect x="404.5" y="446.6" width="9.0" height="25.0" fill="none" stroke="#ff0000" stroke-width="1.2"/><rect x="568.8" y="499" width="131.20000000000005" height="67.39999999999998" fill="none" stroke="#ff0000" stroke-width="1.5"/><path d="M610.6,499 L610.6,566.4" fill="none" stroke="#ff0000" stroke-width="1.5"/><circle cx="588.2" cy="532.7" r="11.7" fill="none" stroke="#ff0000" stroke-width="1.2"/><rect x="369" y="183.8" width="4" height="7.799999999999983" fill="#2070ff"/><rect x="379.75" y="183.8" width="4" height="7.799999999999983" fill="#2070ff"/><rect x="369" y="183.8" width="14.75" height="7.799999999999983" fill="none" stroke="#ff0000" stroke-width="1.2"/><rect x="369" y="211" width="4" height="7" fill="#2070ff"/><rect x="379.75" y="211" width="4" height="7" fill="#2070ff"/><rect x="369" y="211" width="14.75" height="7" fill="none" stroke="#ff0000" stroke-width="1.2"/><rect x="402.3" y="199.5" width="4" height="7.800000000000011" fill="#2070ff"/><rect x="413" y="199.5" width="4" height="7.800000000000011" fill="#2070ff"/><rect x="402.3" y="199.5" width="14.699999999999989" height="7.800000000000011" fill="none" stroke="#ff0000" stroke-width="1.2"/><rect x="402.3" y="210.5" width="4" height="7.800000000000011" fill="#2070ff"/><rect x="413" y="210.5" width="4" height="7.800000000000011" fill="#2070ff"/><rect x="402.3" y="210.5" width="14.699999999999989" height="7.800000000000011" fill="none" stroke="#ff0000" stroke-width="1.2"/><rect x="402.3" y="230.3" width="4" height="7.299999999999983" fill="#2070ff"/><rect x="413" y="230.3" width="4" height="7.299999999999983" fill="#2070ff"/><rect x="402.3" y="230.3" width="14.699999999999989" height="7.299999999999983" fill="none" stroke="#ff0000" stroke-width="1.2"/><rect x="406" y="174" width="4" height="8" fill="#2070ff"/><rect x="417" y="174" width="4" height="8" fill="#2070ff"/><rect x="406" y="174" width="15" height="8" fill="none" stroke="#ff0000" stroke-width="1.2"/><rect x="331" y="427" width="4" height="10.600000000000023" fill="#2070ff"/><rect x="350.4" y="427" width="4" height="10.600000000000023" fill="#2070ff"/><rect x="331" y="427" width="23.399999999999977" height="10.600000000000023" fill="none" stroke="#ff0000" stroke-width="1.2"/><rect x="484" y="510" width="4" height="10" fill="#2070ff"/><rect x="496" y="510" width="4" height="10" fill="#2070ff"/><rect x="484" y="510" width="16" height="10" fill="none" stroke="#ff0000" stroke-width="1.2"/><rect x="529.6" y="194.2" width="14.699999999999932" height="32.60000000000002" fill="none" stroke="#ff0000" stroke-width="1.2"/><rect x="523.6" y="310.3" width="14.600000000000023" height="32.19999999999999" fill="none" stroke="#ff0000" stroke-width="1.2"/><rect x="527.6" y="419.8" width="14.899999999999977" height="32.5" fill="none" stroke="#ff0000" stroke-width="1.2"/><rect x="405" y="255" width="8" height="4" fill="#2070ff"/><rect x="405" y="268" width="8" height="4" fill="#2070ff"/><rect x="405" y="255" width="8" height="17" fill="none" stroke="#ff0000" stroke-width="1.2"/><rect x="401" y="332.7" width="4" height="8.800000000000011" fill="#2070ff"/><rect x="420.8" y="332.7" width="4" height="8.800000000000011" fill="#2070ff"/><rect x="401" y="332.7" width="23.80000000000001" height="8.800000000000011" fill="none" stroke="#ff0000" stroke-width="1.2"/><rect x="632" y="512" width="12" height="6" fill="#2070ff"/><rect x="632" y="524" width="12" height="6" fill="#2070ff"/><rect x="631.9" y="509.4" width="13.100000000000023" height="24.399999999999977" fill="none" stroke="#ff0000" stroke-width="1.2"/><rect x="648" y="530" width="12" height="5" fill="#2070ff"/><rect x="648" y="541" width="12" height="5" fill="#2070ff"/><rect x="647" y="527" width="14" height="24" fill="none" stroke="#ff0000" stroke-width="1.2"/><path d="M494 536H505L499.5 530Z" fill="#ff0000"/><path d="M494,529.5 L505,529.5" fill="none" stroke="#ff0000" stroke-width="1.2"/><path d="M499.5,522 L499.5,546" fill="none" stroke="#ff0000" stroke-width="1"/><rect x="492.7" y="546" width="8.100000000000023" height="16" fill="none" stroke="#ff0000" stroke-width="1.2"/><rect x="493.5" y="547" width="6.5" height="3" fill="#2070ff"/><rect x="493.5" y="558" width="6.5" height="3" fill="#2070ff"/><path d="M342.7,351.85 L543.2,501.2" fill="none" stroke="#e0e0e0" stroke-width="1.6"/><path d="M342.7,384.35 L543.2,517.3" fill="none" stroke="#e0e0e0" stroke-width="1.6"/><path d="M465.6,531.2 L543.2,501.2" fill="none" stroke="#e0e0e0" stroke-width="1.6"/><text x="324.2" y="177.1" font-size="11" fill="#ff0000" text-anchor="start" textLength="10" lengthAdjust="spacingAndGlyphs" >10</text><text x="309.5" y="193.35" font-size="11" fill="#ff0000" text-anchor="start" textLength="21.5" lengthAdjust="spacingAndGlyphs" >3.3V</text><text x="310.5" y="209.6" font-size="11" fill="#ff0000" text-anchor="start" textLength="19.5" lengthAdjust="spacingAndGlyphs" >RAIL</text><text x="315.4" y="225.85" font-size="11" fill="#ff0000" text-anchor="start" textLength="15.5" lengthAdjust="spacingAndGlyphs" >A0</text><text x="315.4" y="242.1" font-size="11" fill="#ff0000" text-anchor="start" textLength="13" lengthAdjust="spacingAndGlyphs" >A1</text><text x="315.4" y="258.35" font-size="11" fill="#ff0000" text-anchor="start" textLength="15" lengthAdjust="spacingAndGlyphs" >A2</text><text x="315.4" y="274.6" font-size="11" fill="#ff0000" text-anchor="start" textLength="15" lengthAdjust="spacingAndGlyphs" >A3</text><text x="315.4" y="290.85" font-size="11" fill="#ff0000" text-anchor="start" textLength="14" lengthAdjust="spacingAndGlyphs" >A4</text><text x="315.4" y="307.1" font-size="11" fill="#ff0000" text-anchor="start" textLength="14" lengthAdjust="spacingAndGlyphs" >A5</text><text x="315.4" y="323.35" font-size="11" fill="#ff0000" text-anchor="start" textLength="14" lengthAdjust="spacingAndGlyphs" >A6</text><text x="315.4" y="339.6" font-size="11" fill="#ff0000" text-anchor="start" textLength="14" lengthAdjust="spacingAndGlyphs" >A7</text><text x="313.4" y="355.85" font-size="11" fill="#ff0000" text-anchor="start" textLength="17.6" lengthAdjust="spacingAndGlyphs" >+5V</text><text x="312.5" y="372.1" font-size="11" fill="#ff0000" text-anchor="start" textLength="17.6" lengthAdjust="spacingAndGlyphs" >RST</text><text x="312.5" y="388.35" font-size="11" fill="#ff0000" text-anchor="start" textLength="17.6" lengthAdjust="spacingAndGlyphs" >GND</text><text x="311.5" y="404.6" font-size="11" fill="#ff0000" text-anchor="start" textLength="17.6" lengthAdjust="spacingAndGlyphs" >VIN</text><text x="463" y="177.1" font-size="10.5" fill="#ff0000" text-anchor="end" textLength="10" lengthAdjust="spacingAndGlyphs" >12</text><text x="463" y="193.35" font-size="10.5" fill="#ff0000" text-anchor="end" textLength="10" lengthAdjust="spacingAndGlyphs" >11</text><text x="463" y="209.6" font-size="10.5" fill="#ff0000" text-anchor="end" textLength="10" lengthAdjust="spacingAndGlyphs" >10</text><text x="463" y="225.85" font-size="10.5" fill="#ff0000" text-anchor="end" textLength="5" lengthAdjust="spacingAndGlyphs" >9</text><text x="463" y="242.1" font-size="10.5" fill="#ff0000" text-anchor="end" textLength="5" lengthAdjust="spacingAndGlyphs" >8</text><text x="463" y="258.35" font-size="10.5" fill="#ff0000" text-anchor="end" textLength="5" lengthAdjust="spacingAndGlyphs" >7</text><text x="463" y="274.6" font-size="10.5" fill="#ff0000" text-anchor="end" textLength="5" lengthAdjust="spacingAndGlyphs" >6</text><text x="463" y="290.85" font-size="10.5" fill="#ff0000" text-anchor="end" textLength="5" lengthAdjust="spacingAndGlyphs" >5</text><text x="463" y="307.1" font-size="10.5" fill="#ff0000" text-anchor="end" textLength="5" lengthAdjust="spacingAndGlyphs" >4</text><text x="463" y="323.35" font-size="10.5" fill="#ff0000" text-anchor="end" textLength="5" lengthAdjust="spacingAndGlyphs" >3</text><text x="463" y="339.6" font-size="10.5" fill="#ff0000" text-anchor="end" textLength="5" lengthAdjust="spacingAndGlyphs" >2</text><text x="453" y="355.85" font-size="10.5" fill="#ff0000" text-anchor="start" textLength="18" lengthAdjust="spacingAndGlyphs" >GND</text><text x="453" y="372.1" font-size="10.5" fill="#ff0000" text-anchor="start" textLength="18" lengthAdjust="spacingAndGlyphs" >RST</text><text x="453" y="388.35" font-size="10.5" fill="#ff0000" text-anchor="start" textLength="18" lengthAdjust="spacingAndGlyphs" >RXI</text><text x="453" y="404.6" font-size="10.5" fill="#ff0000" text-anchor="start" textLength="18" lengthAdjust="spacingAndGlyphs" >TXO</text><text x="0" y="0" font-size="15.5" fill="#ff0000" stroke="#ff0000" stroke-width="0.8" transform="translate(388,250.5) rotate(90)" textLength="101" lengthAdjust="spacingAndGlyphs">Arduino Nano</text><text x="790" y="183" font-size="22" fill="#ff0000" text-anchor="start" textLength="89" lengthAdjust="spacingAndGlyphs" stroke="#ff0000" stroke-width="0.6">Channel 1</text><text x="788" y="277" font-size="22" fill="#ff0000" text-anchor="start" textLength="91" lengthAdjust="spacingAndGlyphs" stroke="#ff0000" stroke-width="0.6">Channel 2</text><text x="790" y="385" font-size="22" fill="#ff0000" text-anchor="start" textLength="93" lengthAdjust="spacingAndGlyphs" stroke="#ff0000" stroke-width="0.6">Channel 3</text><text x="800" y="488" font-size="22" fill="#ff0000" text-anchor="start" textLength="83" lengthAdjust="spacingAndGlyphs" stroke="#ff0000" stroke-width="0.6">+12 ACC</text><text x="800" y="520" font-size="22" fill="#ff0000" text-anchor="start" textLength="97" lengthAdjust="spacingAndGlyphs" stroke="#ff0000" stroke-width="0.6">+12 Break</text><path d="M794,210.5 L804,210.5" fill="none" stroke="#ff0000" stroke-width="2"/><path d="M794,307.8 L804,307.8" fill="none" stroke="#ff0000" stroke-width="2"/><path d="M794,415 L804,415" fill="none" stroke="#ff0000" stroke-width="2"/><path d="M802,545.5 L812,545.5" fill="none" stroke="#ff0000" stroke-width="2"/><rect x="297.5" y="142" width="493.0" height="438" fill="none" stroke="#ff0000" stroke-width="3.6"/></g></svg>
<div class="b" style="left:1121px;top:95px;width:1px;height:556px;background:#fff"></div>
<div class="b" style="left:1122px;top:95px;width:16px;height:571px;background:#f0f0f0"></div>
<div class="b" style="left:121px;top:650px;width:1001px;height:1px;background:#fff"></div>
<div class="b" style="left:122px;top:651px;width:1016px;height:15px;background:#f0f0f0"></div>
<div class="b" style="left:1122px;top:114px;width:15px;height:450px;background:#cdcdcd"></div>
<div class="b" style="left:165px;top:651px;width:939px;height:15px;background:#cdcdcd"></div>
<svg class="b" style="left:0;top:0" width="1140" height="670" viewBox="0 0 1140 670"><path d="M1126 107.5L1129.5 104L1133 107.5M1126 638.5L1129.5 642L1133 638.5" fill="none" stroke="#606060" stroke-width="2"/><path d="M133.5 655L130 658.5L133.5 662M1111 655L1114.5 658.5L1111 662" fill="none" stroke="#606060" stroke-width="2"/></svg>
<div class="b" style="left:1138px;top:95px;width:1px;height:573px;background:#e3e3e3"></div>
<div class="b" style="left:97px;top:668px;width:1042px;height:1px;background:#fff"></div>
<div class="b" style="left:97px;top:669px;width:1043px;height:2px;background:#808080"></div>
<div class="b" style="left:98px;top:671px;width:1042px;height:18px;background:#f6f6f6"></div>
<svg class="b" style="left:0;top:0" width="1140" height="690" viewBox="0 0 1140 690"><path d="M104 669.5L110 685.5H157L162 669.5" fill="#f0f0f0" stroke="#707070" stroke-width="1.2"/><rect x="104" y="668" width="58" height="2.5" fill="#f0f0f0"/></svg>
<div class="t" style="left:111px;top:674px;font-size:11px;color:#101040;">Плата 1</div>
<svg class="b" style="left:0;top:0" width="1366" height="690" viewBox="0 0 1366 690"><rect x="1142" y="74" width="1" height="1" fill="#606060"/><rect x="1145" y="76" width="1" height="1" fill="#606060"/><rect x="1142" y="78" width="1" height="1" fill="#606060"/><rect x="1145" y="80" width="1" height="1" fill="#606060"/><rect x="1142" y="82" width="1" height="1" fill="#606060"/><rect x="1145" y="84" width="1" height="1" fill="#606060"/><rect x="1142" y="86" width="1" height="1" fill="#606060"/><rect x="1145" y="88" width="1" height="1" fill="#606060"/><rect x="1142" y="90" width="1" height="1" fill="#606060"/><rect x="1145" y="92" width="1" height="1" fill="#606060"/><rect x="1142" y="94" width="1" height="1" fill="#606060"/><rect x="1145" y="96" width="1" height="1" fill="#606060"/><rect x="1142" y="98" width="1" height="1" fill="#606060"/><rect x="1145" y="100" width="1" height="1" fill="#606060"/><rect x="1142" y="102" width="1" height="1" fill="#606060"/><rect x="1145" y="104" width="1" height="1" fill="#606060"/><rect x="1142" y="106" width="1" height="1" fill="#606060"/><rect x="1145" y="108" width="1" height="1" fill="#606060"/><rect x="1142" y="110" width="1" height="1" fill="#606060"/><rect x="1145" y="112" width="1" height="1" fill="#606060"/><rect x="1142" y="114" width="1" height="1" fill="#606060"/><rect x="1145" y="116" width="1" height="1" fill="#606060"/><rect x="1142" y="118" width="1" height="1" fill="#606060"/><rect x="1145" y="120" width="1" height="1" fill="#606060"/><rect x="1142" y="122" width="1" height="1" fill="#606060"/><rect x="1145" y="124" width="1" height="1" fill="#606060"/><rect x="1142" y="126" width="1" height="1" fill="#606060"/><rect x="1145" y="128" width="1" height="1" fill="#606060"/><rect x="1142" y="130" width="1" height="1" fill="#606060"/><rect x="1145" y="132" width="1" height="1" fill="#606060"/><rect x="1142" y="134" width="1" height="1" fill="#606060"/><rect x="1145" y="136" width="1" height="1" fill="#606060"/><rect x="1142" y="138" width="1" height="1" fill="#606060"/><rect x="1145" y="140" width="1" height="1" fill="#606060"/><rect x="1142" y="142" width="1" height="1" fill="#606060"/><rect x="1145" y="144" width="1" height="1" fill="#606060"/><rect x="1142" y="146" width="1" height="1" fill="#606060"/><rect x="1145" y="148" width="1" height="1" fill="#606060"/><rect x="1142" y="150" width="1" height="1" fill="#606060"/><rect x="1145" y="152" width="1" height="1" fill="#606060"/><rect x="1142" y="154" width="1" height="1" fill="#606060"/><rect x="1145" y="156" width="1" height="1" fill="#606060"/><rect x="1142" y="158" width="1" height="1" fill="#606060"/><rect x="1145" y="160" width="1" height="1" fill="#606060"/><rect x="1142" y="162" width="1" height="1" fill="#606060"/><rect x="1145" y="164" width="1" height="1" fill="#606060"/><rect x="1142" y="166" width="1" height="1" fill="#606060"/><rect x="1145" y="168" width="1" height="1" fill="#606060"/><rect x="1142" y="170" width="1" height="1" fill="#606060"/><rect x="1145" y="172" width="1" height="1" fill="#606060"/><rect x="1142" y="174" width="1" height="1" fill="#606060"/><rect x="1145" y="176" width="1" height="1" fill="#606060"/><rect x="1142" y="178" width="1" height="1" fill="#606060"/><rect x="1145" y="180" width="1" height="1" fill="#606060"/><rect x="1142" y="182" width="1" height="1" fill="#606060"/><rect x="1145" y="184" width="1" height="1" fill="#606060"/><rect x="1142" y="186" width="1" height="1" fill="#606060"/><rect x="1145" y="188" width="1" height="1" fill="#606060"/><rect x="1142" y="190" width="1" height="1" fill="#606060"/><rect x="1145" y="192" width="1" height="1" fill="#606060"/><rect x="1142" y="194" width="1" height="1" fill="#606060"/><rect x="1145" y="196" width="1" height="1" fill="#606060"/><rect x="1142" y="198" width="1" height="1" fill="#606060"/><rect x="1145" y="200" width="1" height="1" fill="#606060"/><rect x="1142" y="202" width="1" height="1" fill="#606060"/><rect x="1145" y="204" width="1" height="1" fill="#606060"/><rect x="1142" y="206" width="1" height="1" fill="#606060"/><rect x="1145" y="208" width="1" height="1" fill="#606060"/><rect x="1142" y="210" width="1" height="1" fill="#606060"/><rect x="1145" y="212" width="1" height="1" fill="#606060"/><rect x="1142" y="214" width="1" height="1" fill="#606060"/><rect x="1145" y="216" width="1" height="1" fill="#606060"/><rect x="1142" y="218" width="1" height="1" fill="#606060"/><rect x="1145" y="220" width="1" height="1" fill="#606060"/><rect x="1142" y="222" width="1" height="1" fill="#606060"/><rect x="1145" y="224" width="1" height="1" fill="#606060"/><rect x="1142" y="226" width="1" height="1" fill="#606060"/><rect x="1145" y="228" width="1" height="1" fill="#606060"/><rect x="1142" y="230" width="1" height="1" fill="#606060"/><rect x="1145" y="232" width="1" height="1" fill="#606060"/><rect x="1142" y="234" width="1" height="1" fill="#606060"/><rect x="1145" y="236" width="1" height="1" fill="#606060"/><rect x="1142" y="238" width="1" height="1" fill="#606060"/><rect x="1145" y="240" width="1" height="1" fill="#606060"/><rect x="1142" y="242" width="1" height="1" fill="#606060"/><rect x="1145" y="244" width="1" height="1" fill="#606060"/><rect x="1142" y="246" width="1" height="1" fill="#606060"/><rect x="1145" y="248" width="1" height="1" fill="#606060"/><rect x="1142" y="250" width="1" height="1" fill="#606060"/><rect x="1145" y="252" width="1" height="1" fill="#606060"/><rect x="1142" y="254" width="1" height="1" fill="#606060"/><rect x="1145" y="256" width="1" height="1" fill="#606060"/><rect x="1142" y="258" width="1" height="1" fill="#606060"/><rect x="1145" y="260" width="1" height="1" fill="#606060"/><rect x="1142" y="262" width="1" height="1" fill="#606060"/><rect x="1145" y="264" width="1" height="1" fill="#606060"/><rect x="1142" y="266" width="1" height="1" fill="#606060"/><rect x="1145" y="268" width="1" height="1" fill="#606060"/><rect x="1142" y="270" width="1" height="1" fill="#606060"/><rect x="1145" y="272" width="1" height="1" fill="#606060"/><rect x="1142" y="274" width="1" height="1" fill="#606060"/><rect x="1145" y="276" width="1" height="1" fill="#606060"/><rect x="1142" y="278" width="1" height="1" fill="#606060"/><rect x="1145" y="280" width="1" height="1" fill="#606060"/><rect x="1142" y="282" width="1" height="1" fill="#606060"/><rect x="1145" y="284" width="1" height="1" fill="#606060"/><rect x="1142" y="286" width="1" height="1" fill="#606060"/><rect x="1145" y="288" width="1" height="1" fill="#606060"/><rect x="1142" y="290" width="1" height="1" fill="#606060"/><rect x="1145" y="292" width="1" height="1" fill="#606060"/><rect x="1142" y="294" width="1" height="1" fill="#606060"/><rect x="1145" y="296" width="1" height="1" fill="#606060"/><rect x="1142" y="298" width="1" height="1" fill="#606060"/><rect x="1145" y="300" width="1" height="1" fill="#606060"/><rect x="1142" y="302" width="1" height="1" fill="#606060"/><rect x="1145" y="304" width="1" height="1" fill="#606060"/><rect x="1142" y="306" width="1" height="1" fill="#606060"/><rect x="1145" y="308" width="1" height="1" fill="#606060"/><rect x="1142" y="310" width="1" height="1" fill="#606060"/><rect x="1145" y="312" width="1" height="1" fill="#606060"/><rect x="1142" y="314" width="1" height="1" fill="#606060"/><rect x="1145" y="316" width="1" height="1" fill="#606060"/><rect x="1142" y="318" width="1" height="1" fill="#606060"/><rect x="1145" y="320" width="1" height="1" fill="#606060"/><rect x="1142" y="322" width="1" height="1" fill="#606060"/><rect x="1145" y="324" width="1" height="1" fill="#606060"/><rect x="1142" y="326" width="1" height="1" fill="#606060"/><rect x="1145" y="328" width="1" height="1" fill="#606060"/><rect x="1142" y="330" width="1" height="1" fill="#606060"/><rect x="1145" y="332" width="1" height="1" fill="#606060"/><rect x="1142" y="334" width="1" height="1" fill="#606060"/><rect x="1145" y="336" width="1" height="1" fill="#606060"/><rect x="1142" y="338" width="1" height="1" fill="#606060"/><rect x="1145" y="340" width="1" height="1" fill="#606060"/><rect x="1142" y="342" width="1" height="1" fill="#606060"/><rect x="1145" y="344" width="1" height="1" fill="#606060"/><rect x="1142" y="346" width="1" height="1" fill="#606060"/><rect x="1145" y="348" width="1" height="1" fill="#606060"/><rect x="1142" y="350" width="1" height="1" fill="#606060"/><rect x="1145" y="352" width="1" height="1" fill="#606060"/><rect x="1142" y="354" width="1" height="1" fill="#606060"/><rect x="1145" y="356" width="1" height="1" fill="#606060"/><rect x="1142" y="358" width="1" height="1" fill="#606060"/><rect x="1145" y="360" width="1" height="1" fill="#606060"/><rect x="1142" y="362" width="1" height="1" fill="#606060"/><rect x="1145" y="364" width="1" height="1" fill="#606060"/><rect x="1142" y="366" width="1" height="1" fill="#606060"/><rect x="1145" y="368" width="1" height="1" fill="#606060"/><rect x="1142" y="370" width="1" height="1" fill="#606060"/><rect x="1145" y="372" width="1" height="1" fill="#606060"/><rect x="1142" y="374" width="1" height="1" fill="#606060"/><rect x="1145" y="376" width="1" height="1" fill="#606060"/><rect x="1142" y="378" width="1" height="1" fill="#606060"/><rect x="1145" y="380" width="1" height="1" fill="#606060"/><rect x="1142" y="382" width="1" height="1" fill="#606060"/><rect x="1145" y="384" width="1" height="1" fill="#606060"/><rect x="1142" y="386" width="1" height="1" fill="#606060"/><rect x="1145" y="388" width="1" height="1" fill="#606060"/><rect x="1142" y="390" width="1" height="1" fill="#606060"/><rect x="1145" y="392" width="1" height="1" fill="#606060"/><rect x="1142" y="394" width="1" height="1" fill="#606060"/><rect x="1145" y="396" width="1" height="1" fill="#606060"/><rect x="1142" y="398" width="1" height="1" fill="#606060"/><rect x="1145" y="400" width="1" height="1" fill="#606060"/><rect x="1142" y="402" width="1" height="1" fill="#606060"/><rect x="1145" y="404" width="1" height="1" fill="#606060"/><rect x="1142" y="406" width="1" height="1" fill="#606060"/><rect x="1145" y="408" width="1" height="1" fill="#606060"/><rect x="1142" y="410" width="1" height="1" fill="#606060"/><rect x="1145" y="412" width="1" height="1" fill="#606060"/><rect x="1142" y="414" width="1" height="1" fill="#606060"/><rect x="1145" y="416" width="1" height="1" fill="#606060"/><rect x="1142" y="418" width="1" height="1" fill="#606060"/><rect x="1145" y="420" width="1" height="1" fill="#606060"/><rect x="1142" y="422" width="1" height="1" fill="#606060"/><rect x="1145" y="424" width="1" height="1" fill="#606060"/><rect x="1142" y="426" width="1" height="1" fill="#606060"/><rect x="1145" y="428" width="1" height="1" fill="#606060"/><rect x="1142" y="430" width="1" height="1" fill="#606060"/><rect x="1145" y="432" width="1" height="1" fill="#606060"/><rect x="1142" y="434" width="1" height="1" fill="#606060"/><rect x="1145" y="436" width="1" height="1" fill="#606060"/><rect x="1142" y="438" width="1" height="1" fill="#606060"/><rect x="1145" y="440" width="1" height="1" fill="#606060"/><rect x="1142" y="442" width="1" height="1" fill="#606060"/><rect x="1145" y="444" width="1" height="1" fill="#606060"/><rect x="1142" y="446" width="1" height="1" fill="#606060"/><rect x="1145" y="448" width="1" height="1" fill="#606060"/><rect x="1142" y="450" width="1" height="1" fill="#606060"/><rect x="1145" y="452" width="1" height="1" fill="#606060"/><rect x="1142" y="454" width="1" height="1" fill="#606060"/><rect x="1145" y="456" width="1" height="1" fill="#606060"/><rect x="1142" y="458" width="1" height="1" fill="#606060"/><rect x="1145" y="460" width="1" height="1" fill="#606060"/><rect x="1142" y="462" width="1" height="1" fill="#606060"/><rect x="1145" y="464" width="1" height="1" fill="#606060"/><rect x="1142" y="466" width="1" height="1" fill="#606060"/><rect x="1145" y="468" width="1" height="1" fill="#606060"/><rect x="1142" y="470" width="1" height="1" fill="#606060"/><rect x="1145" y="472" width="1" height="1" fill="#606060"/><rect x="1142" y="474" width="1" height="1" fill="#606060"/><rect x="1145" y="476" width="1" height="1" fill="#606060"/><rect x="1142" y="478" width="1" height="1" fill="#606060"/><rect x="1145" y="480" width="1" height="1" fill="#606060"/><rect x="1142" y="482" width="1" height="1" fill="#606060"/><rect x="1145" y="484" width="1" height="1" fill="#606060"/><rect x="1142" y="486" width="1" height="1" fill="#606060"/><rect x="1145" y="488" width="1" height="1" fill="#606060"/><rect x="1142" y="490" width="1" height="1" fill="#606060"/><rect x="1145" y="492" width="1" height="1" fill="#606060"/><rect x="1142" y="494" width="1" height="1" fill="#606060"/><rect x="1145" y="496" width="1" height="1" fill="#606060"/><rect x="1142" y="498" width="1" height="1" fill="#606060"/><rect x="1145" y="500" width="1" height="1" fill="#606060"/><rect x="1142" y="502" width="1" height="1" fill="#606060"/><rect x="1145" y="504" width="1" height="1" fill="#606060"/><rect x="1142" y="506" width="1" height="1" fill="#606060"/><rect x="1145" y="508" width="1" height="1" fill="#606060"/><rect x="1142" y="510" width="1" height="1" fill="#606060"/><rect x="1145" y="512" width="1" height="1" fill="#606060"/><rect x="1142" y="514" width="1" height="1" fill="#606060"/><rect x="1145" y="516" width="1" height="1" fill="#606060"/><rect x="1142" y="518" width="1" height="1" fill="#606060"/><rect x="1145" y="520" width="1" height="1" fill="#606060"/><rect x="1142" y="522" width="1" height="1" fill="#606060"/><rect x="1145" y="524" width="1" height="1" fill="#606060"/><rect x="1142" y="526" width="1" height="1" fill="#606060"/><rect x="1145" y="528" width="1" height="1" fill="#606060"/><rect x="1142" y="530" width="1" height="1" fill="#606060"/><rect x="1145" y="532" width="1" height="1" fill="#606060"/><rect x="1142" y="534" width="1" height="1" fill="#606060"/><rect x="1145" y="536" width="1" height="1" fill="#606060"/><rect x="1142" y="538" width="1" height="1" fill="#606060"/><rect x="1145" y="540" width="1" height="1" fill="#606060"/><rect x="1142" y="542" width="1" height="1" fill="#606060"/><rect x="1145" y="544" width="1" height="1" fill="#606060"/><rect x="1142" y="546" width="1" height="1" fill="#606060"/><rect x="1145" y="548" width="1" height="1" fill="#606060"/><rect x="1142" y="550" width="1" height="1" fill="#606060"/><rect x="1145" y="552" width="1" height="1" fill="#606060"/><rect x="1142" y="554" width="1" height="1" fill="#606060"/><rect x="1145" y="556" width="1" height="1" fill="#606060"/><rect x="1142" y="558" width="1" height="1" fill="#606060"/><rect x="1145" y="560" width="1" height="1" fill="#606060"/><rect x="1142" y="562" width="1" height="1" fill="#606060"/><rect x="1145" y="564" width="1" height="1" fill="#606060"/><rect x="1142" y="566" width="1" height="1" fill="#606060"/><rect x="1145" y="568" width="1" height="1" fill="#606060"/><rect x="1142" y="570" width="1" height="1" fill="#606060"/><rect x="1145" y="572" width="1" height="1" fill="#606060"/><rect x="1142" y="574" width="1" height="1" fill="#606060"/><rect x="1145" y="576" width="1" height="1" fill="#606060"/><rect x="1142" y="578" width="1" height="1" fill="#606060"/><rect x="1145" y="580" width="1" height="1" fill="#606060"/><rect x="1142" y="582" width="1" height="1" fill="#606060"/><rect x="1145" y="584" width="1" height="1" fill="#606060"/><rect x="1142" y="586" width="1" height="1" fill="#606060"/><rect x="1145" y="588" width="1" height="1" fill="#606060"/><rect x="1142" y="590" width="1" height="1" fill="#606060"/><rect x="1145" y="592" width="1" height="1" fill="#606060"/><rect x="1142" y="594" width="1" height="1" fill="#606060"/><rect x="1145" y="596" width="1" height="1" fill="#606060"/><rect x="1142" y="598" width="1" height="1" fill="#606060"/><rect x="1145" y="600" width="1" height="1" fill="#606060"/><rect x="1142" y="602" width="1" height="1" fill="#606060"/><rect x="1145" y="604" width="1" height="1" fill="#606060"/><rect x="1142" y="606" width="1" height="1" fill="#606060"/><rect x="1145" y="608" width="1" height="1" fill="#606060"/><rect x="1142" y="610" width="1" height="1" fill="#606060"/><rect x="1145" y="612" width="1" height="1" fill="#606060"/><rect x="1142" y="614" width="1" height="1" fill="#606060"/><rect x="1145" y="616" width="1" height="1" fill="#606060"/><rect x="1142" y="618" width="1" height="1" fill="#606060"/><rect x="1145" y="620" width="1" height="1" fill="#606060"/><rect x="1142" y="622" width="1" height="1" fill="#606060"/><rect x="1145" y="624" width="1" height="1" fill="#606060"/><rect x="1142" y="626" width="1" height="1" fill="#606060"/><rect x="1145" y="628" width="1" height="1" fill="#606060"/><rect x="1142" y="630" width="1" height="1" fill="#606060"/><rect x="1145" y="632" width="1" height="1" fill="#606060"/><rect x="1142" y="634" width="1" height="1" fill="#606060"/><rect x="1145" y="636" width="1" height="1" fill="#606060"/><rect x="1142" y="638" width="1" height="1" fill="#606060"/><rect x="1145" y="640" width="1" height="1" fill="#606060"/><rect x="1142" y="642" width="1" height="1" fill="#606060"/><rect x="1145" y="644" width="1" height="1" fill="#606060"/><rect x="1142" y="646" width="1" height="1" fill="#606060"/><rect x="1145" y="648" width="1" height="1" fill="#606060"/><rect x="1142" y="650" width="1" height="1" fill="#606060"/><rect x="1145" y="652" width="1" height="1" fill="#606060"/><rect x="1142" y="654" width="1" height="1" fill="#606060"/><rect x="1145" y="656" width="1" height="1" fill="#606060"/><rect x="1142" y="658" width="1" height="1" fill="#606060"/><rect x="1145" y="660" width="1" height="1" fill="#606060"/><rect x="1142" y="662" width="1" height="1" fill="#606060"/><rect x="1145" y="664" width="1" height="1" fill="#606060"/><rect x="1142" y="666" width="1" height="1" fill="#606060"/><rect x="1145" y="668" width="1" height="1" fill="#606060"/><rect x="1142" y="670" width="1" height="1" fill="#606060"/><rect x="1145" y="672" width="1" height="1" fill="#606060"/><rect x="1142" y="674" width="1" height="1" fill="#606060"/><rect x="1145" y="676" width="1" height="1" fill="#606060"/><rect x="1142" y="678" width="1" height="1" fill="#606060"/><rect x="1145" y="680" width="1" height="1" fill="#606060"/><rect x="1142" y="682" width="1" height="1" fill="#606060"/><rect x="1145" y="684" width="1" height="1" fill="#606060"/><rect x="1142" y="686" width="1" height="1" fill="#606060"/><rect x="1145" y="688" width="1" height="1" fill="#606060"/></svg>
<div class="b" style="left:1147px;top:74px;width:219px;height:616px;background:#f0f0f0"></div>
<div class="b" style="left:1147px;top:74px;width:219px;height:18px;background:#000"></div>
<div class="t" style="left:1219px;top:78px;font-size:12px;color:#ff5a50;font-weight:bold;letter-spacing:0.3px">Библиотека</div>
<div class="b" style="left:1348px;top:75px;width:16px;height:17px;background:#f0f0f0;border-right:1px solid #a0a0a0;border-bottom:1px solid #a0a0a0"></div>
<svg class="b" style="left:1351px;top:78px" width="10" height="10"><path d="M1 1L9 9M9 1L1 9" stroke="#000" stroke-width="1.5"/></svg>
<div class="b" style="left:1147px;top:95px;width:219px;height:240px;background:#fff;border:1px solid #8a9098"></div>
<svg class="b" style="left:0;top:0" width="1366" height="340" viewBox="0 0 1366 340"><rect x="1160.5" y="97" width="1" height="1" fill="#808080"/><rect x="1160.5" y="100" width="1" height="1" fill="#808080"/><rect x="1160.5" y="103" width="1" height="1" fill="#808080"/><rect x="1160.5" y="106" width="1" height="1" fill="#808080"/><rect x="1160.5" y="109" width="1" height="1" fill="#808080"/><rect x="1160.5" y="112" width="1" height="1" fill="#808080"/><rect x="1160.5" y="115" width="1" height="1" fill="#808080"/><rect x="1160.5" y="118" width="1" height="1" fill="#808080"/><rect x="1160.5" y="121" width="1" height="1" fill="#808080"/><rect x="1160.5" y="124" width="1" height="1" fill="#808080"/><rect x="1160.5" y="127" width="1" height="1" fill="#808080"/><rect x="1160.5" y="130" width="1" height="1" fill="#808080"/><rect x="1160.5" y="133" width="1" height="1" fill="#808080"/><rect x="1160.5" y="136" width="1" height="1" fill="#808080"/><rect x="1160.5" y="139" width="1" height="1" fill="#808080"/><rect x="1160.5" y="142" width="1" height="1" fill="#808080"/><rect x="1160.5" y="145" width="1" height="1" fill="#808080"/><rect x="1160.5" y="148" width="1" height="1" fill="#808080"/><rect x="1160.5" y="151" width="1" height="1" fill="#808080"/><rect x="1160.5" y="154" width="1" height="1" fill="#808080"/><rect x="1160.5" y="157" width="1" height="1" fill="#808080"/><rect x="1160.5" y="160" width="1" height="1" fill="#808080"/><rect x="1160.5" y="163" width="1" height="1" fill="#808080"/><rect x="1160.5" y="166" width="1" height="1" fill="#808080"/><rect x="1160.5" y="169" width="1" height="1" fill="#808080"/><rect x="1160.5" y="172" width="1" height="1" fill="#808080"/><rect x="1160.5" y="175" width="1" height="1" fill="#808080"/><rect x="1160.5" y="178" width="1" height="1" fill="#808080"/><rect x="1160.5" y="181" width="1" height="1" fill="#808080"/><rect x="1160.5" y="184" width="1" height="1" fill="#808080"/><rect x="1160.5" y="187" width="1" height="1" fill="#808080"/><rect x="1160.5" y="190" width="1" height="1" fill="#808080"/><rect x="1160.5" y="193" width="1" height="1" fill="#808080"/><rect x="1160.5" y="196" width="1" height="1" fill="#808080"/><rect x="1160.5" y="199" width="1" height="1" fill="#808080"/><rect x="1160.5" y="202" width="1" height="1" fill="#808080"/><rect x="1160.5" y="205" width="1" height="1" fill="#808080"/><rect x="1160.5" y="208" width="1" height="1" fill="#808080"/><rect x="1160.5" y="211" width="1" height="1" fill="#808080"/><rect x="1160.5" y="214" width="1" height="1" fill="#808080"/><rect x="1160.5" y="217" width="1" height="1" fill="#808080"/><rect x="1160.5" y="220" width="1" height="1" fill="#808080"/><rect x="1160.5" y="223" width="1" height="1" fill="#808080"/><rect x="1160.5" y="226" width="1" height="1" fill="#808080"/><rect x="1160.5" y="229" width="1" height="1" fill="#808080"/><rect x="1160.5" y="232" width="1" height="1" fill="#808080"/><rect x="1160.5" y="235" width="1" height="1" fill="#808080"/><rect x="1160.5" y="238" width="1" height="1" fill="#808080"/><rect x="1160.5" y="241" width="1" height="1" fill="#808080"/><rect x="1160.5" y="244" width="1" height="1" fill="#808080"/><rect x="1160.5" y="247" width="1" height="1" fill="#808080"/><rect x="1160.5" y="250" width="1" height="1" fill="#808080"/><rect x="1160.5" y="253" width="1" height="1" fill="#808080"/><rect x="1160.5" y="256" width="1" height="1" fill="#808080"/><rect x="1160.5" y="259" width="1" height="1" fill="#808080"/><rect x="1160.5" y="262" width="1" height="1" fill="#808080"/><rect x="1160.5" y="265" width="1" height="1" fill="#808080"/><rect x="1160.5" y="268" width="1" height="1" fill="#808080"/><rect x="1160.5" y="271" width="1" height="1" fill="#808080"/><rect x="1160.5" y="274" width="1" height="1" fill="#808080"/><rect x="1160.5" y="277" width="1" height="1" fill="#808080"/><rect x="1160.5" y="280" width="1" height="1" fill="#808080"/><rect x="1160.5" y="283" width="1" height="1" fill="#808080"/><rect x="1160.5" y="286" width="1" height="1" fill="#808080"/><rect x="1160.5" y="289" width="1" height="1" fill="#808080"/><rect x="1160.5" y="292" width="1" height="1" fill="#808080"/><rect x="1160.5" y="295" width="1" height="1" fill="#808080"/><rect x="1160.5" y="298" width="1" height="1" fill="#808080"/><rect x="1160.5" y="301" width="1" height="1" fill="#808080"/><rect x="1160.5" y="304" width="1" height="1" fill="#808080"/><rect x="1160.5" y="307" width="1" height="1" fill="#808080"/><rect x="1160.5" y="310" width="1" height="1" fill="#808080"/><rect x="1160.5" y="313" width="1" height="1" fill="#808080"/><rect x="1177.5" y="97" width="1" height="1" fill="#808080"/><rect x="1177.5" y="100" width="1" height="1" fill="#808080"/><rect x="1177.5" y="103" width="1" height="1" fill="#808080"/><rect x="1177.5" y="106" width="1" height="1" fill="#808080"/><rect x="1177.5" y="109" width="1" height="1" fill="#808080"/><rect x="1177.5" y="112" width="1" height="1" fill="#808080"/><rect x="1177.5" y="115" width="1" height="1" fill="#808080"/><rect x="1177.5" y="118" width="1" height="1" fill="#808080"/><rect x="1177.5" y="121" width="1" height="1" fill="#808080"/><rect x="1177.5" y="124" width="1" height="1" fill="#808080"/><rect x="1177.5" y="127" width="1" height="1" fill="#808080"/><rect x="1177.5" y="130" width="1" height="1" fill="#808080"/><rect x="1177.5" y="133" width="1" height="1" fill="#808080"/><rect x="1177.5" y="136" width="1" height="1" fill="#808080"/><rect x="1177.5" y="139" width="1" height="1" fill="#808080"/><rect x="1177.5" y="142" width="1" height="1" fill="#808080"/><rect x="1177.5" y="145" width="1" height="1" fill="#808080"/><rect x="1177.5" y="148" width="1" height="1" fill="#808080"/><rect x="1177.5" y="151" width="1" height="1" fill="#808080"/><rect x="1177.5" y="154" width="1" height="1" fill="#808080"/><rect x="1177.5" y="157" width="1" height="1" fill="#808080"/><rect x="1177.5" y="160" width="1" height="1" fill="#808080"/><rect x="1177.5" y="163" width="1" height="1" fill="#808080"/><rect x="1177.5" y="166" width="1" height="1" fill="#808080"/><rect x="1177.5" y="169" width="1" height="1" fill="#808080"/><rect x="1177.5" y="172" width="1" height="1" fill="#808080"/><rect x="1177.5" y="175" width="1" height="1" fill="#808080"/><rect x="1177.5" y="178" width="1" height="1" fill="#808080"/><rect x="1177.5" y="181" width="1" height="1" fill="#808080"/><rect x="1177.5" y="184" width="1" height="1" fill="#808080"/><rect x="1177.5" y="187" width="1" height="1" fill="#808080"/><rect x="1177.5" y="190" width="1" height="1" fill="#808080"/><rect x="1177.5" y="193" width="1" height="1" fill="#808080"/><rect x="1177.5" y="196" width="1" height="1" fill="#808080"/><rect x="1177.5" y="199" width="1" height="1" fill="#808080"/><rect x="1177.5" y="202" width="1" height="1" fill="#808080"/><rect x="1177.5" y="205" width="1" height="1" fill="#808080"/><rect x="1177.5" y="208" width="1" height="1" fill="#808080"/><rect x="1177.5" y="211" width="1" height="1" fill="#808080"/><rect x="1177.5" y="214" width="1" height="1" fill="#808080"/><rect x="1177.5" y="217" width="1" height="1" fill="#808080"/><rect x="1177.5" y="220" width="1" height="1" fill="#808080"/><rect x="1177.5" y="223" width="1" height="1" fill="#808080"/><rect x="1177.5" y="226" width="1" height="1" fill="#808080"/><rect x="1177.5" y="229" width="1" height="1" fill="#808080"/><rect x="1177.5" y="232" width="1" height="1" fill="#808080"/><rect x="1177.5" y="235" width="1" height="1" fill="#808080"/><rect x="1177.5" y="238" width="1" height="1" fill="#808080"/><rect x="1177.5" y="241" width="1" height="1" fill="#808080"/><rect x="1177.5" y="244" width="1" height="1" fill="#808080"/><rect x="1177.5" y="247" width="1" height="1" fill="#808080"/><rect x="1177.5" y="250" width="1" height="1" fill="#808080"/><rect x="1177.5" y="253" width="1" height="1" fill="#808080"/><rect x="1177.5" y="256" width="1" height="1" fill="#808080"/><rect x="1177.5" y="259" width="1" height="1" fill="#808080"/><rect x="1177.5" y="262" width="1" height="1" fill="#808080"/><rect x="1177.5" y="265" width="1" height="1" fill="#808080"/><rect x="1177.5" y="268" width="1" height="1" fill="#808080"/><rect x="1177.5" y="271" width="1" height="1" fill="#808080"/><rect x="1177.5" y="274" width="1" height="1" fill="#808080"/><rect x="1177.5" y="277" width="1" height="1" fill="#808080"/><rect x="1177.5" y="280" width="1" height="1" fill="#808080"/><rect x="1177.5" y="283" width="1" height="1" fill="#808080"/><rect x="1177.5" y="286" width="1" height="1" fill="#808080"/><rect x="1177.5" y="289" width="1" height="1" fill="#808080"/><rect x="1177.5" y="292" width="1" height="1" fill="#808080"/><rect x="1177.5" y="295" width="1" height="1" fill="#808080"/><rect x="1177.5" y="298" width="1" height="1" fill="#808080"/><rect x="1177.5" y="301" width="1" height="1" fill="#808080"/><rect x="1177.5" y="304" width="1" height="1" fill="#808080"/><rect x="1177.5" y="307" width="1" height="1" fill="#808080"/><rect x="1177.5" y="310" width="1" height="1" fill="#808080"/><rect x="1177.5" y="313" width="1" height="1" fill="#808080"/><rect x="1194.5" y="97" width="1" height="1" fill="#808080"/><rect x="1194.5" y="100" width="1" height="1" fill="#808080"/><rect x="1194.5" y="103" width="1" height="1" fill="#808080"/><rect x="1194.5" y="106" width="1" height="1" fill="#808080"/><rect x="1194.5" y="109" width="1" height="1" fill="#808080"/><rect x="1194.5" y="112" width="1" height="1" fill="#808080"/><rect x="1194.5" y="115" width="1" height="1" fill="#808080"/><rect x="1194.5" y="118" width="1" height="1" fill="#808080"/><rect x="1194.5" y="121" width="1" height="1" fill="#808080"/><rect x="1194.5" y="124" width="1" height="1" fill="#808080"/><rect x="1194.5" y="127" width="1" height="1" fill="#808080"/><rect x="1194.5" y="130" width="1" height="1" fill="#808080"/><rect x="1194.5" y="133" width="1" height="1" fill="#808080"/><rect x="1194.5" y="136" width="1" height="1" fill="#808080"/><rect x="1194.5" y="139" width="1" height="1" fill="#808080"/><rect x="1194.5" y="142" width="1" height="1" fill="#808080"/><rect x="1194.5" y="145" width="1" height="1" fill="#808080"/><rect x="1194.5" y="148" width="1" height="1" fill="#808080"/><rect x="1194.5" y="151" width="1" height="1" fill="#808080"/><rect x="1194.5" y="154" width="1" height="1" fill="#808080"/><rect x="1194.5" y="157" width="1" height="1" fill="#808080"/><rect x="1194.5" y="160" width="1" height="1" fill="#808080"/><rect x="1194.5" y="163" width="1" height="1" fill="#808080"/><rect x="1194.5" y="166" width="1" height="1" fill="#808080"/><rect x="1194.5" y="169" width="1" height="1" fill="#808080"/><rect x="1194.5" y="172" width="1" height="1" fill="#808080"/><rect x="1194.5" y="175" width="1" height="1" fill="#808080"/><rect x="1194.5" y="178" width="1" height="1" fill="#808080"/><rect x="1194.5" y="181" width="1" height="1" fill="#808080"/><rect x="1194.5" y="184" width="1" height="1" fill="#808080"/><rect x="1194.5" y="187" width="1" height="1" fill="#808080"/><rect x="1194.5" y="190" width="1" height="1" fill="#808080"/><rect x="1194.5" y="193" width="1" height="1" fill="#808080"/><rect x="1194.5" y="196" width="1" height="1" fill="#808080"/><rect x="1194.5" y="199" width="1" height="1" fill="#808080"/><rect x="1194.5" y="202" width="1" height="1" fill="#808080"/><rect x="1194.5" y="205" width="1" height="1" fill="#808080"/><rect x="1194.5" y="208" width="1" height="1" fill="#808080"/><rect x="1194.5" y="211" width="1" height="1" fill="#808080"/><rect x="1194.5" y="214" width="1" height="1" fill="#808080"/><rect x="1194.5" y="217" width="1" height="1" fill="#808080"/><rect x="1194.5" y="220" width="1" height="1" fill="#808080"/><rect x="1194.5" y="223" width="1" height="1" fill="#808080"/><rect x="1194.5" y="226" width="1" height="1" fill="#808080"/><rect x="1194.5" y="229" width="1" height="1" fill="#808080"/><rect x="1194.5" y="232" width="1" height="1" fill="#808080"/><rect x="1194.5" y="235" width="1" height="1" fill="#808080"/><rect x="1194.5" y="238" width="1" height="1" fill="#808080"/><rect x="1194.5" y="241" width="1" height="1" fill="#808080"/><rect x="1194.5" y="244" width="1" height="1" fill="#808080"/><rect x="1194.5" y="247" width="1" height="1" fill="#808080"/><rect x="1194.5" y="250" width="1" height="1" fill="#808080"/><rect x="1194.5" y="253" width="1" height="1" fill="#808080"/><rect x="1194.5" y="256" width="1" height="1" fill="#808080"/><rect x="1194.5" y="259" width="1" height="1" fill="#808080"/><rect x="1194.5" y="262" width="1" height="1" fill="#808080"/><rect x="1194.5" y="265" width="1" height="1" fill="#808080"/><rect x="1194.5" y="268" width="1" height="1" fill="#808080"/><rect x="1194.5" y="271" width="1" height="1" fill="#808080"/><rect x="1194.5" y="274" width="1" height="1" fill="#808080"/><rect x="1194.5" y="277" width="1" height="1" fill="#808080"/><rect x="1194.5" y="280" width="1" height="1" fill="#808080"/><rect x="1194.5" y="283" width="1" height="1" fill="#808080"/><rect x="1194.5" y="286" width="1" height="1" fill="#808080"/><rect x="1194.5" y="289" width="1" height="1" fill="#808080"/><rect x="1194.5" y="292" width="1" height="1" fill="#808080"/><rect x="1194.5" y="295" width="1" height="1" fill="#808080"/><rect x="1194.5" y="298" width="1" height="1" fill="#808080"/><rect x="1194.5" y="301" width="1" height="1" fill="#808080"/><rect x="1194.5" y="304" width="1" height="1" fill="#808080"/><rect x="1194.5" y="307" width="1" height="1" fill="#808080"/><rect x="1194.5" y="310" width="1" height="1" fill="#808080"/><rect x="1194.5" y="313" width="1" height="1" fill="#808080"/><rect x="1203" y="145" width="65" height="16" fill="#e6e6e6"/><rect x="1196" y="104.4" width="1" height="1" fill="#808080"/><rect x="1198" y="104.4" width="1" height="1" fill="#808080"/><rect x="1200" y="104.4" width="1" height="1" fill="#808080"/><rect x="1202" y="104.4" width="1" height="1" fill="#808080"/><rect x="1196" y="120.4" width="1" height="1" fill="#808080"/><rect x="1198" y="120.4" width="1" height="1" fill="#808080"/><rect x="1200" y="120.4" width="1" height="1" fill="#808080"/><rect x="1202" y="120.4" width="1" height="1" fill="#808080"/><rect x="1196" y="136.4" width="1" height="1" fill="#808080"/><rect x="1198" y="136.4" width="1" height="1" fill="#808080"/><rect x="1200" y="136.4" width="1" height="1" fill="#808080"/><rect x="1202" y="136.4" width="1" height="1" fill="#808080"/><rect x="1196" y="152.4" width="1" height="1" fill="#808080"/><rect x="1198" y="152.4" width="1" height="1" fill="#808080"/><rect x="1200" y="152.4" width="1" height="1" fill="#808080"/><rect x="1202" y="152.4" width="1" height="1" fill="#808080"/><rect x="1196" y="168.4" width="1" height="1" fill="#808080"/><rect x="1198" y="168.4" width="1" height="1" fill="#808080"/><rect x="1200" y="168.4" width="1" height="1" fill="#808080"/><rect x="1202" y="168.4" width="1" height="1" fill="#808080"/><rect x="1196" y="184.4" width="1" height="1" fill="#808080"/><rect x="1198" y="184.4" width="1" height="1" fill="#808080"/><rect x="1200" y="184.4" width="1" height="1" fill="#808080"/><rect x="1202" y="184.4" width="1" height="1" fill="#808080"/><rect x="1196" y="200.4" width="1" height="1" fill="#808080"/><rect x="1198" y="200.4" width="1" height="1" fill="#808080"/><rect x="1200" y="200.4" width="1" height="1" fill="#808080"/><rect x="1202" y="200.4" width="1" height="1" fill="#808080"/><rect x="1196" y="216.4" width="1" height="1" fill="#808080"/><rect x="1198" y="216.4" width="1" height="1" fill="#808080"/><rect x="1200" y="216.4" width="1" height="1" fill="#808080"/><rect x="1202" y="216.4" width="1" height="1" fill="#808080"/><rect x="1196" y="232.4" width="1" height="1" fill="#808080"/><rect x="1198" y="232.4" width="1" height="1" fill="#808080"/><rect x="1200" y="232.4" width="1" height="1" fill="#808080"/><rect x="1202" y="232.4" width="1" height="1" fill="#808080"/><rect x="1196" y="248.4" width="1" height="1" fill="#808080"/><rect x="1198" y="248.4" width="1" height="1" fill="#808080"/><rect x="1200" y="248.4" width="1" height="1" fill="#808080"/><rect x="1202" y="248.4" width="1" height="1" fill="#808080"/><rect x="1196" y="264.4" width="1" height="1" fill="#808080"/><rect x="1198" y="264.4" width="1" height="1" fill="#808080"/><rect x="1200" y="264.4" width="1" height="1" fill="#808080"/><rect x="1202" y="264.4" width="1" height="1" fill="#808080"/><rect x="1196" y="280.4" width="1" height="1" fill="#808080"/><rect x="1198" y="280.4" width="1" height="1" fill="#808080"/><rect x="1200" y="280.4" width="1" height="1" fill="#808080"/><rect x="1202" y="280.4" width="1" height="1" fill="#808080"/><rect x="1196" y="296.4" width="1" height="1" fill="#808080"/><rect x="1198" y="296.4" width="1" height="1" fill="#808080"/><rect x="1200" y="296.4" width="1" height="1" fill="#808080"/><rect x="1202" y="296.4" width="1" height="1" fill="#808080"/><rect x="1196" y="312.4" width="1" height="1" fill="#808080"/><rect x="1198" y="312.4" width="1" height="1" fill="#808080"/><rect x="1200" y="312.4" width="1" height="1" fill="#808080"/><rect x="1202" y="312.4" width="1" height="1" fill="#808080"/></svg>
<div class="b" style="left:1148px;top:96px;width:200px;height:220px;overflow:hidden"><div class="t" style="left:56px;top:4px;font-size:11px;color:#000020;letter-spacing:-0.2px">0603 1k Rekomended Yageo a</div><div class="t" style="left:56px;top:20px;font-size:11px;color:#000020;letter-spacing:-0.2px">0603 3k3 a1</div><div class="t" style="left:56px;top:36px;font-size:11px;color:#000020;letter-spacing:-0.2px">0805 1k a1</div><div class="t" style="left:56px;top:52px;font-size:11px;color:#000020;letter-spacing:-0.2px">0805 1k a12</div><div class="t" style="left:56px;top:68px;font-size:11px;color:#000020;letter-spacing:-0.2px">0805 1k Rekomended Walsin a</div><div class="t" style="left:56px;top:84px;font-size:11px;color:#000020;letter-spacing:-0.2px">1206 3k3 a1</div><div class="t" style="left:56px;top:100px;font-size:11px;color:#000020;letter-spacing:-0.2px">1206 3k3 Rekomended Walsin</div><div class="t" style="left:56px;top:116px;font-size:11px;color:#000020;letter-spacing:-0.2px">1210 1k a1</div><div class="t" style="left:56px;top:132px;font-size:11px;color:#000020;letter-spacing:-0.2px">R0402</div><div class="t" style="left:56px;top:148px;font-size:11px;color:#000020;letter-spacing:-0.2px">R0603</div><div class="t" style="left:56px;top:164px;font-size:11px;color:#000020;letter-spacing:-0.2px">R0805</div><div class="t" style="left:56px;top:180px;font-size:11px;color:#000020;letter-spacing:-0.2px">R1206</div><div class="t" style="left:56px;top:196px;font-size:11px;color:#000020;letter-spacing:-0.2px">R1210</div><div class="t" style="left:56px;top:212px;font-size:11px;color:#000020;letter-spacing:-0.2px">R2010</div></div>
<div class="b" style="left:1348px;top:96px;width:17px;height:220px;background:#f0f0f0"></div>
<div class="b" style="left:1349px;top:186px;width:15px;height:48px;background:#cdcdcd"></div>
<div class="b" style="left:1148px;top:316px;width:217px;height:18px;background:#f0f0f0"></div>
<div class="b" style="left:1166px;top:317px;width:155px;height:15px;background:#cdcdcd"></div>
<svg class="b" style="left:0;top:0" width="1366" height="340" viewBox="0 0 1366 340"><path d="M1352.5 108L1356 104.5L1359.5 108M1352.5 306L1356 309.5L1359.5 306" fill="none" stroke="#606060" stroke-width="2"/><path d="M1160 320.5L1156.5 324L1160 327.5M1337.5 320.5L1341 324L1337.5 327.5" fill="none" stroke="#606060" stroke-width="2"/></svg>
<svg class="b" style="left:0;top:0" width="1366" height="345" viewBox="0 0 1366 345"><rect x="1147" y="338" width="1" height="1" fill="#707070"/><rect x="1150" y="340" width="1" height="1" fill="#707070"/><rect x="1153" y="338" width="1" height="1" fill="#707070"/><rect x="1156" y="340" width="1" height="1" fill="#707070"/><rect x="1159" y="338" width="1" height="1" fill="#707070"/><rect x="1162" y="340" width="1" height="1" fill="#707070"/><rect x="1165" y="338" width="1" height="1" fill="#707070"/><rect x="1168" y="340" width="1" height="1" fill="#707070"/><rect x="1171" y="338" width="1" height="1" fill="#707070"/><rect x="1174" y="340" width="1" height="1" fill="#707070"/><rect x="1177" y="338" width="1" height="1" fill="#707070"/><rect x="1180" y="340" width="1" height="1" fill="#707070"/><rect x="1183" y="338" width="1" height="1" fill="#707070"/><rect x="1186" y="340" width="1" height="1" fill="#707070"/><rect x="1189" y="338" width="1" height="1" fill="#707070"/><rect x="1192" y="340" width="1" height="1" fill="#707070"/><rect x="1195" y="338" width="1" height="1" fill="#707070"/><rect x="1198" y="340" width="1" height="1" fill="#707070"/><rect x="1201" y="338" width="1" height="1" fill="#707070"/><rect x="1204" y="340" width="1" height="1" fill="#707070"/><rect x="1207" y="338" width="1" height="1" fill="#707070"/><rect x="1210" y="340" width="1" height="1" fill="#707070"/><rect x="1213" y="338" width="1" height="1" fill="#707070"/><rect x="1216" y="340" width="1" height="1" fill="#707070"/><rect x="1219" y="338" width="1" height="1" fill="#707070"/><rect x="1222" y="340" width="1" height="1" fill="#707070"/><rect x="1225" y="338" width="1" height="1" fill="#707070"/><rect x="1228" y="340" width="1" height="1" fill="#707070"/><rect x="1231" y="338" width="1" height="1" fill="#707070"/><rect x="1234" y="340" width="1" height="1" fill="#707070"/><rect x="1237" y="338" width="1" height="1" fill="#707070"/><rect x="1240" y="340" width="1" height="1" fill="#707070"/><rect x="1243" y="338" width="1" height="1" fill="#707070"/><rect x="1246" y="340" width="1" height="1" fill="#707070"/><rect x="1249" y="338" width="1" height="1" fill="#707070"/><rect x="1252" y="340" width="1" height="1" fill="#707070"/><rect x="1255" y="338" width="1" height="1" fill="#707070"/><rect x="1258" y="340" width="1" height="1" fill="#707070"/><rect x="1261" y="338" width="1" height="1" fill="#707070"/><rect x="1264" y="340" width="1" height="1" fill="#707070"/><rect x="1267" y="338" width="1" height="1" fill="#707070"/><rect x="1270" y="340" width="1" height="1" fill="#707070"/><rect x="1273" y="338" width="1" height="1" fill="#707070"/><rect x="1276" y="340" width="1" height="1" fill="#707070"/><rect x="1279" y="338" width="1" height="1" fill="#707070"/><rect x="1282" y="340" width="1" height="1" fill="#707070"/><rect x="1285" y="338" width="1" height="1" fill="#707070"/><rect x="1288" y="340" width="1" height="1" fill="#707070"/><rect x="1291" y="338" width="1" height="1" fill="#707070"/><rect x="1294" y="340" width="1" height="1" fill="#707070"/><rect x="1297" y="338" width="1" height="1" fill="#707070"/><rect x="1300" y="340" width="1" height="1" fill="#707070"/><rect x="1303" y="338" width="1" height="1" fill="#707070"/><rect x="1306" y="340" width="1" height="1" fill="#707070"/><rect x="1309" y="338" width="1" height="1" fill="#707070"/><rect x="1312" y="340" width="1" height="1" fill="#707070"/><rect x="1315" y="338" width="1" height="1" fill="#707070"/><rect x="1318" y="340" width="1" height="1" fill="#707070"/><rect x="1321" y="338" width="1" height="1" fill="#707070"/><rect x="1324" y="340" width="1" height="1" fill="#707070"/><rect x="1327" y="338" width="1" height="1" fill="#707070"/><rect x="1330" y="340" width="1" height="1" fill="#707070"/><rect x="1333" y="338" width="1" height="1" fill="#707070"/><rect x="1336" y="340" width="1" height="1" fill="#707070"/><rect x="1339" y="338" width="1" height="1" fill="#707070"/><rect x="1342" y="340" width="1" height="1" fill="#707070"/><rect x="1345" y="338" width="1" height="1" fill="#707070"/><rect x="1348" y="340" width="1" height="1" fill="#707070"/><rect x="1351" y="338" width="1" height="1" fill="#707070"/><rect x="1354" y="340" width="1" height="1" fill="#707070"/><rect x="1357" y="338" width="1" height="1" fill="#707070"/><rect x="1360" y="340" width="1" height="1" fill="#707070"/><rect x="1363" y="338" width="1" height="1" fill="#707070"/></svg>
<div class="b" style="left:1150px;top:342px;width:13px;height:13px;background:#fff;border:1px solid #333"></div>
<svg class="b" style="left:1151px;top:343px" width="11" height="11"><path d="M2 5.5L4.5 8L9.5 2.5" fill="none" stroke="#222" stroke-width="1.4"/></svg>
<div class="t" style="left:1165px;top:344px;font-size:11px;color:#000020;">Как компонент</div>
<svg class="b" style="left:0;top:0" width="1366" height="390" viewBox="0 0 1366 390">
<rect x="1152" y="363" width="14" height="14" fill="#1020d0"/><rect x="1155" y="363" width="8" height="5" fill="#fff"/><rect x="1154.5" y="370.5" width="9" height="6.5" fill="#fff"/><rect x="1159" y="372" width="2" height="3" fill="#1020d0"/><rect x="1152" y="363" width="14" height="14" fill="none" stroke="#000" stroke-width="0.8"/>
<path d="M1174.5 366H1188.5M1178.5 364V362.5H1184.5V364" stroke="#000" stroke-width="1.3" fill="none"/><path d="M1176.5 367.5H1186.5L1185.5 377.5H1177.5Z" fill="none" stroke="#000" stroke-width="1.3"/><path d="M1179.5 369V376M1181.5 369V376M1183.5 369V376" stroke="#000" stroke-width="0.8"/>
<path d="M1289 368.5A6 6 0 1 0 1289.5 372" fill="none" stroke="#000" stroke-width="2.2"/><path d="M1285.5 364L1291 363.5L1290.5 369Z" fill="#000"/>
<circle cx="1307" cy="370" r="7" fill="#000"/><circle cx="1307" cy="370" r="2.2" fill="#f00"/>
<path d="M1328 362V369M1325 366.5L1328 370L1331 366.5" stroke="#000" stroke-width="2" fill="none"/><rect x="1324.5" y="371.5" width="7" height="3" fill="none" stroke="#000"/><rect x="1320" y="375" width="16" height="2" fill="#000"/>
</svg>
<div class="t" style="left:1339px;top:365px;font-size:11px;color:#000018;letter-spacing:-0.6px">ВЕРХ</div>
<div class="b" style="left:1147px;top:383px;width:219px;height:31px;background:#e8e8e8;border-top:2px solid #a8a8a8;border-left:2px solid #a8a8a8"></div>
<svg class="b" style="left:0;top:0" width="1366" height="690" viewBox="0 0 1366 690" font-family="Liberation Sans, sans-serif"><rect x="1147" y="414" width="219" height="274" fill="#000"/><rect x="1156.95" y="414" width="1.6" height="274" fill="#585858"/><rect x="1180.65" y="414" width="1.6" height="274" fill="#585858"/><rect x="1204.65" y="414" width="1.6" height="274" fill="#585858"/><rect x="1228.35" y="414" width="1.6" height="274" fill="#585858"/><rect x="1252.05" y="414" width="1.6" height="274" fill="#585858"/><rect x="1275.75" y="414" width="1.6" height="274" fill="#585858"/><rect x="1300.25" y="414" width="1.6" height="274" fill="#585858"/><rect x="1323.85" y="414" width="1.6" height="274" fill="#585858"/><rect x="1347.55" y="414" width="1.6" height="274" fill="#585858"/><rect x="1147" y="431.25" width="219" height="1.6" fill="#585858"/><rect x="1147" y="455.55" width="219" height="1.6" fill="#585858"/><rect x="1147" y="480.05" width="219" height="1.6" fill="#585858"/><rect x="1147" y="503.85" width="219" height="1.6" fill="#585858"/><rect x="1147" y="527.75" width="219" height="1.6" fill="#585858"/><rect x="1147" y="551.55" width="219" height="1.6" fill="#585858"/><rect x="1147" y="575.25" width="219" height="1.6" fill="#585858"/><rect x="1147" y="599.25" width="219" height="1.6" fill="#585858"/><rect x="1147" y="623.45" width="219" height="1.6" fill="#585858"/><rect x="1147" y="647.75" width="219" height="1.6" fill="#585858"/><rect x="1147" y="671.75" width="219" height="1.6" fill="#585858"/><path d="M1173.3 505.9H1211.6L1218.9 513.9V589.7L1211.6 597.7H1173.3L1157.7 582.2V521.2Z" fill="#2266f8"/><path d="M1300.9 505.9H1338.8L1354.5 521.5V582.2L1338.8 597.7H1300.9L1293.6 589.7V513.9Z" fill="#2266f8"/><rect x="1180.6" y="505.9" width="151.3" height="91.8" fill="none" stroke="#e01010" stroke-width="1.3"/><path d="M1218.2 505.9V597.7M1293.6 505.9V597.7" stroke="#e01010" stroke-width="1.3"/><text x="1289" y="530.5" font-size="19" fill="#ff1a1a" textLength="17" lengthAdjust="spacingAndGlyphs">1k</text><text x="1281.6" y="554.7" font-size="11.5" fill="#ff1a1a" textLength="73" lengthAdjust="spacingAndGlyphs">0,125W 70•C 150V</text><text x="1298.4" y="578.4" font-size="11.5" fill="#ff1a1a" textLength="41.6" lengthAdjust="spacingAndGlyphs">0805 2012</text></svg>
<div class="t" style="left:1252px;top:673px;font-size:11px;color:#e0e0e0;letter-spacing:0px">Нажать и перетянуть</div>
<div class="b" style="left:0px;top:690px;width:1366px;height:37px;background:#f0f0f0"></div>
<div class="b" style="left:3px;top:690px;width:83px;height:37px;border-top:1px solid #a0a0a0;border-left:1px solid #a0a0a0;background:#f0f0f0"></div>
<div class="t" style="left:8px;top:696px;font-size:11px;color:#000030;">X:</div>
<div class="t" style="left:8px;top:711px;font-size:11px;color:#000030;">Y:</div>
<div class="t" style="left:27px;top:696px;font-size:11px;color:#000030;width:55px;text-align:right;letter-spacing:-0.5px">145,000 мм</div>
<div class="t" style="left:27px;top:711px;font-size:11px;color:#000030;width:55px;text-align:right;letter-spacing:-0.5px">57,969 мм</div>
<div class="b" style="left:90px;top:690px;width:49px;height:37px;border-top:1px solid #a0a0a0;border-left:1px solid #a0a0a0"></div>
<div class="b" style="left:90px;top:708px;width:49px;height:1px;background:#c8c8c8"></div>
<div class="t" style="left:90px;top:696px;font-size:11px;color:#000020;letter-spacing:-0.1px">Видимый</div>
<div class="t" style="left:90px;top:712px;font-size:11px;color:#000020;letter-spacing:0.2px">Текущий</div>
<div class="b" style="left:139px;top:691px;width:120px;height:17px;background:#000"></div>
<svg class="b" style="left:0;top:0" width="1366" height="730" viewBox="0 0 1366 730" font-family="Liberation Sans, sans-serif">
<text x="141" y="704.5" font-size="13" font-weight="bold" fill="#3a7af8" textLength="17" lengthAdjust="spacingAndGlyphs">M1</text>
<text x="167" y="704.5" font-size="13" font-weight="bold" fill="#ff2020" textLength="16" lengthAdjust="spacingAndGlyphs">K1</text>
<text x="189" y="704.5" font-size="13" font-weight="bold" fill="#10c010" textLength="19" lengthAdjust="spacingAndGlyphs">M2</text>
<text x="215" y="704.5" font-size="13" font-weight="bold" fill="#f0e020" textLength="16" lengthAdjust="spacingAndGlyphs">K2</text>
<text x="242" y="704.5" font-size="13" font-weight="bold" fill="#fff" textLength="9" lengthAdjust="spacingAndGlyphs">П</text>
<path d="M162.5 709V727M186.5 709V727M210.5 709V727M234.5 709V727M258.5 709V727" stroke="#c8c8c8"/>
<circle cx="149.5" cy="718" r="5.5" fill="#fff" stroke="#333" stroke-width="1"/>
<circle cx="173.5" cy="718" r="5.5" fill="#fff" stroke="#333" stroke-width="1"/>
<circle cx="197.5" cy="718" r="5.5" fill="#fff" stroke="#333" stroke-width="1"/><circle cx="197.5" cy="718" r="2.8" fill="#333"/>
<circle cx="221.5" cy="718" r="5.5" fill="#fff" stroke="#333" stroke-width="1"/>
<circle cx="245.5" cy="718" r="5.5" fill="#fff" stroke="#333" stroke-width="1"/>
<text x="263" y="714" font-size="11" fill="#000030">?</text>
<rect x="284" y="696" width="26" height="26" fill="#7a7a7a"/>
<path d="M285 701H294L303 710" fill="none" stroke="#fff" stroke-width="5.5"/><path d="M285 701H294L303 710" fill="none" stroke="#000" stroke-width="3"/><circle cx="303" cy="712" r="4.5" fill="#000" stroke="#fff" stroke-width="1.5"/><circle cx="303" cy="712" r="1.5" fill="#fff"/>
<path d="M325 708.5H349M337 697V720" stroke="#808080" stroke-width="1.2"/><circle cx="337" cy="708.5" r="5" fill="none" stroke="#808080" stroke-width="3"/>
<path d="M366 718Q362 712 372 706L383 701Q390 700 388 705L376 714Q369 720 366 718Z" fill="none" stroke="#303030" stroke-width="2.5"/>
<path d="M367 699L389 720M389 699L367 720" stroke="#f00" stroke-width="2"/>
</svg>
<div class="b" style="left:278px;top:690px;width:38px;height:37px;border-top:1px solid #c8c8c8;border-left:1px solid #c8c8c8"></div>
<div class="b" style="left:319px;top:690px;width:38px;height:37px;border-top:1px solid #c8c8c8;border-left:1px solid #c8c8c8"></div>
<div class="b" style="left:360px;top:690px;width:38px;height:37px;border-top:1px solid #c8c8c8;border-left:1px solid #c8c8c8"></div>
<div class="b" style="left:401px;top:690px;width:965px;height:37px;border-top:1px solid #c8c8c8;border-left:1px solid #c8c8c8"></div>
<div class="b" style="left:405px;top:707px;width:939px;height:1px;background:#a8a8a8"></div>
<div class="t" style="left:407px;top:694px;font-size:11px;color:#000080;">КУРСОР: Выделение, перемещение, копирование, дублирование, вставка и удаление</div>
<div class="b" style="left:0px;top:727px;width:1366px;height:41px;background:#111618"></div>
<div class="b" style="left:900px;top:727px;width:200px;height:41px;background:radial-gradient(ellipse 70px 30px at 95px 12px, rgba(45,45,15,0.3), rgba(0,0,0,0) 100%)"></div>
<div class="b" style="left:196px;top:728px;width:48px;height:40px;background:#3b3e40"></div>
<div class="b" style="left:196px;top:766px;width:48px;height:2px;background:#76b9ed"></div>
<div class="b" style="left:249px;top:766px;width:40px;height:2px;background:#76b9ed"></div>
<div class="b" style="left:298px;top:766px;width:40px;height:2px;background:#76b9ed"></div>
<svg class="b" style="left:0;top:727px" width="1366" height="41" viewBox="0 727 1366 41" font-family="Liberation Sans, sans-serif">
<path d="M16 741.5L23 740.5V747H16Z M24 740.3L32 739V747H24Z M16 748H23V754.5L16 753.5Z M24 748H32V756L24 754.7Z" fill="#fff"/>
<circle cx="74.5" cy="745" r="5.3" fill="none" stroke="#fff" stroke-width="1.3"/><path d="M70.5 749L64.5 755" stroke="#fff" stroke-width="1.5"/>
<rect x="113.5" y="741.5" width="13" height="13" fill="none" stroke="#fff" stroke-width="1.2"/><path d="M110.5 743V753M129.5 743V753" stroke="#fff" stroke-width="1.2"/>
<path d="M160 740H168L170 742H182V756H160Z" fill="#e8b840"/><rect x="160" y="744" width="22" height="12" fill="#f8d868"/><path d="M167 751H175V756H167Z" fill="#2a8ad8"/><rect x="165" y="749" width="12" height="2.5" fill="#2a8ad8"/>
<rect x="216" y="736" width="6" height="6" fill="#10a010"/><circle cx="218" cy="748" r="7" fill="#20b820"/><rect x="224" y="744" width="7" height="8" fill="#10a010"/><circle cx="217.5" cy="748" r="2.2" fill="#fff"/>
<circle cx="268.5" cy="747.5" r="11" fill="#d03a30"/><path d="M268.5 747.5L259 753A11 11 0 0 0 273 758Z" fill="#2a9a40"/><path d="M268.5 747.5L278 753A11 11 0 0 1 268.5 758.5Z" fill="#f8c820"/><path d="M268.5 747.5L259 753A11 11 0 0 1 257.5 747.5Z" fill="#2a9a40"/><circle cx="268.5" cy="747.5" r="4.8" fill="#fff"/><circle cx="268.5" cy="747.5" r="3.8" fill="#4a80e0"/>
<rect x="306" y="739" width="22" height="17" fill="#d8e0e8"/><rect x="306" y="739" width="22" height="3" fill="#a0b0c0"/><rect x="308" y="743" width="12" height="11" fill="#3a9a6a"/><rect x="322" y="744" width="4" height="8" fill="#5080c0"/>
<path d="M1121.5 751.5L1127 746L1132.5 751.5" fill="none" stroke="#fff" stroke-width="1.3"/>
<path d="M1143 744H1146M1144.5 744V748M1143 748H1146V751H1145V753" fill="none" stroke="#fff" stroke-width="1"/><rect x="1148.5" y="745.5" width="9" height="6" fill="none" stroke="#fff"/><rect x="1150" y="747" width="4" height="3" fill="#fff"/><rect x="1158" y="747" width="1.2" height="3" fill="#fff"/>
<path d="M1171 753A11 11 0 0 1 1182 742M1174 753A8 8 0 0 1 1182 745M1177 753A5 5 0 0 1 1182 748" fill="none" stroke="#fff" stroke-width="1"/><circle cx="1181" cy="752" r="1.5" fill="#fff"/>
<path d="M1192 745.5H1195L1199 742V755L1195 751.5H1192Z" fill="none" stroke="#fff" stroke-width="1"/><path d="M1201.5 746Q1203.5 748.5 1201.5 751M1203.5 744Q1206.5 748.5 1203.5 753M1205.5 742Q1209.5 748.5 1205.5 755" fill="none" stroke="#fff" stroke-width="1"/>
<text x="1217" y="751.8" font-size="11.5" fill="#fff" textLength="23" lengthAdjust="spacingAndGlyphs">ENG</text>
<text x="1266" y="743" font-size="11.5" fill="#fff" textLength="26" lengthAdjust="spacingAndGlyphs">11:51</text>
<text x="1253" y="760.3" font-size="11.5" fill="#fff" textLength="53" lengthAdjust="spacingAndGlyphs">05.08.2017</text>
<path d="M1325.5 741.5H1341.5V753.5H1336L1333 756.5L1330 753.5H1325.5Z" fill="none" stroke="#fff" stroke-width="1.1"/>
<rect x="1361" y="727" width="1" height="41" fill="#505050"/>
</svg>
</body></html>
